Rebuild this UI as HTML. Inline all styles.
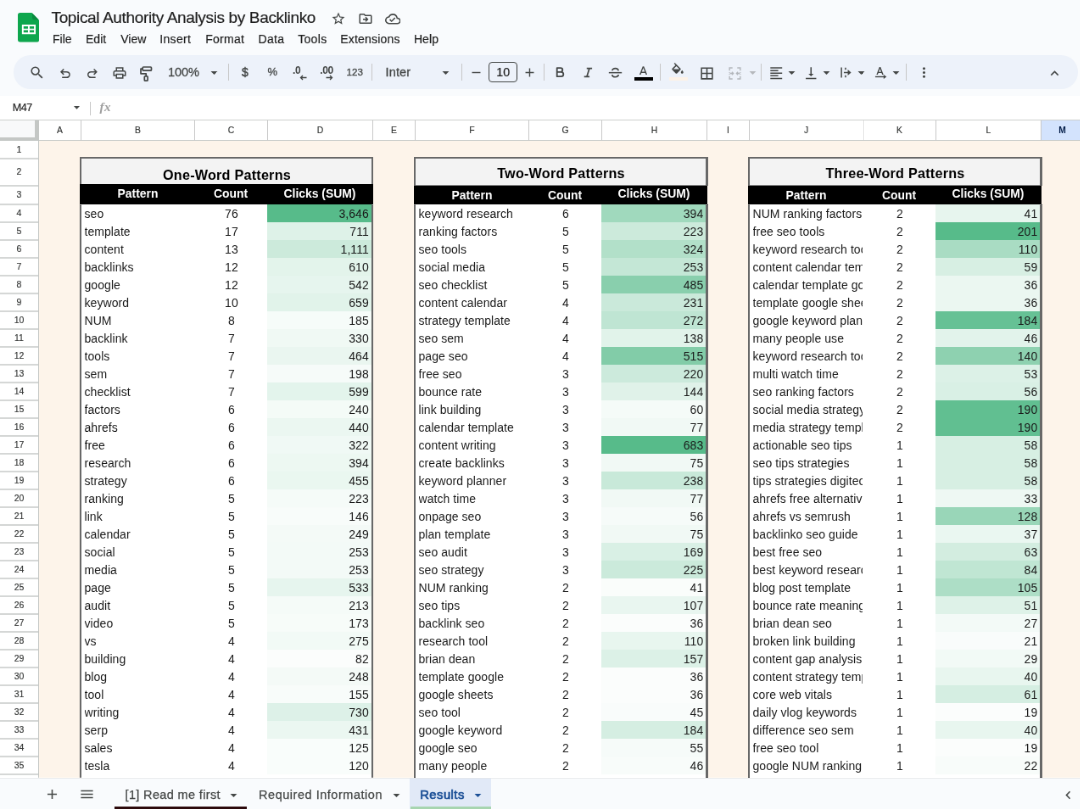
<!DOCTYPE html>
<html lang="en"><head><meta charset="utf-8"><title>Topical Authority Analysis by Backlinko - Google Sheets</title>
<style>
html,body{margin:0;padding:0;width:1080px;height:809px;overflow:hidden;background:#fff}
#app{position:absolute;left:0;top:0;width:1274px;height:954px;transform:scale(0.8481);will-change:transform;transform-origin:0 0;overflow:hidden;
font-family:"Liberation Sans",sans-serif;-webkit-font-smoothing:antialiased}
#app>div,#app>svg{position:absolute;white-space:nowrap}
.c{letter-spacing:.06px}
</style></head><body><div id="app">
<div style="left:0px;top:0px;width:1274px;height:113px;background:#f9fbfd;"></div>
<svg style="left:21.2px;top:15.200px" width="25.200" height="34.600" viewBox="0 0 26 35" preserveAspectRatio="none"><path d="M2.800 0H17l9 9v23.200a2.800 2.800 0 0 1-2.800 2.800H2.800A2.800 2.800 0 0 1 0 32.200V2.800A2.800 2.800 0 0 1 2.800 0z" fill="#0ea64d"></path><path d="M17.600 .600l7.800 7.800h-5.400A2.400 2.400 0 0 1 17.600 6z" fill="#0b8a40"></path><path d="M5 14.100h16.700v11.500H5zM7 16.100v2.750h5.350v-2.750zM14.350 16.100v2.750h5.350v-2.750zM7 20.850v2.750h5.350v-2.750zM14.350 20.850v2.750h5.350v-2.750z" fill="#fff" fill-rule="evenodd"></path></svg>
<div style="top: 11.12px; font-size: 19px; line-height: 19px; color: rgb(31, 31, 31); left: 60.5px; -webkit-text-stroke: 0.2px rgb(31, 31, 31); letter-spacing: -0.353px;">Topical Authority Analysis by Backlinko</div>
<svg style="left:390.4px;top:13.3px;" width="18" height="18" viewBox="0 0 24 24" fill="#444746"><path d="M22 9.24l-7.19-.62L12 2 9.19 8.63 2 9.24l5.46 4.73L5.82 21 12 17.27 18.18 21l-1.63-7.03L22 9.24zM12 15.4l-3.76 2.27 1-4.28-3.32-2.88 4.38-.38L12 6.1l1.71 4.04 4.38.38-3.32 2.88 1 4.28L12 15.4z"></path></svg>
<svg style="left:422.3px;top:13.4px;" width="18" height="18" viewBox="0 0 24 24" fill="#444746"><path d="M20 6h-8l-2-2H4c-1.1 0-2 .9-2 2v12c0 1.1.9 2 2 2h16c1.1 0 2-.9 2-2V8c0-1.1-.9-2-2-2zm0 12H4V6h5.17l2 2H20v10zm-7.16-4H8v-2h4.84l-1.59-1.59L12.66 9l4 4-4 4-1.41-1.41L12.840 14z"></path></svg>
<svg style="left:453.85px;top:12.95px;" width="18.5" height="18.5" viewBox="0 0 24 24" fill="#444746"><path d="M19.35 10.04C18.67 6.59 15.64 4 12 4 9.11 4 6.6 5.64 5.35 8.04 2.34 8.36 0 10.91 0 14c0 3.31 2.69 6 6 6h13c2.76 0 5-2.24 5-5 0-2.64-2.05-4.78-4.65-4.96zM19 18H6c-2.21 0-4-1.79-4-4 0-2.05 1.53-3.76 3.56-3.97l1.07-.11.5-.95C8.08 7.14 9.94 6 12 6c2.62 0 4.88 1.86 5.39 4.43l.3 1.5 1.53.11c1.56.1 2.78 1.41 2.78 2.96 0 1.65-1.35 3-3 3zm-9-3.82l-2.09-2.09L6.5 13.5 10 17l6.01-6.01-1.41-1.41z"></path></svg>
<div style="top: 38.85px; font-size: 14px; line-height: 14px; color: rgb(31, 31, 31); left: 62px; -webkit-text-stroke: 0.2px rgb(31, 31, 31); letter-spacing: 0.009px;">File</div>
<div style="top: 38.85px; font-size: 14px; line-height: 14px; color: rgb(31, 31, 31); left: 100.9px; -webkit-text-stroke: 0.2px rgb(31, 31, 31); letter-spacing: 0.069px;">Edit</div>
<div style="top: 38.85px; font-size: 14px; line-height: 14px; color: rgb(31, 31, 31); left: 142.2px; -webkit-text-stroke: 0.2px rgb(31, 31, 31); letter-spacing: 0.052px;">View</div>
<div style="top: 38.85px; font-size: 14px; line-height: 14px; color: rgb(31, 31, 31); left: 188.2px; -webkit-text-stroke: 0.2px rgb(31, 31, 31); letter-spacing: 0.347px;">Insert</div>
<div style="top: 38.85px; font-size: 14px; line-height: 14px; color: rgb(31, 31, 31); left: 242.2px; -webkit-text-stroke: 0.2px rgb(31, 31, 31); letter-spacing: 0.276px;">Format</div>
<div style="top: 38.85px; font-size: 14px; line-height: 14px; color: rgb(31, 31, 31); left: 304.5px; -webkit-text-stroke: 0.2px rgb(31, 31, 31); letter-spacing: 0.33px;">Data</div>
<div style="top: 38.85px; font-size: 14px; line-height: 14px; color: rgb(31, 31, 31); left: 351.2px; -webkit-text-stroke: 0.2px rgb(31, 31, 31); letter-spacing: 0.322px;">Tools</div>
<div style="top: 38.85px; font-size: 14px; line-height: 14px; color: rgb(31, 31, 31); left: 401.3px; -webkit-text-stroke: 0.2px rgb(31, 31, 31); letter-spacing: 0.182px;">Extensions</div>
<div style="top: 38.85px; font-size: 14px; line-height: 14px; color: rgb(31, 31, 31); left: 487.9px; -webkit-text-stroke: 0.2px rgb(31, 31, 31); letter-spacing: 0.101px;">Help</div>
<div style="left:16px;top:65px;width:1255px;height:40px;background:#edf2fa;border-radius:20px;"></div>
<svg style="left:33.7px;top:75.9px;" width="19.2" height="19.2" viewBox="0 0 24 24" fill="#444746"><path d="M15.5 14h-.79l-.28-.27A6.471 6.471 0 0 0 16 9.5 6.5 6.5 0 1 0 9.5 16c1.61 0 3.09-.59 4.23-1.57l.27.28v.79l5 4.99L20.49 19l-4.99-5zm-6 0C7.01 14 5 11.99 5 9.5S7.01 5 9.5 5 14 7.01 14 9.5 11.99 14 9.5 14z"></path></svg>
<svg style="left:68.1px;top:78px;" width="17.8" height="17.8" viewBox="0 0 24 24" fill="#444746"><path d="M7 19v-2h7.1q1.575 0 2.738-1T18 13.5 16.838 11 14.1 10H7.8l2.6 2.6L9 14 4 9l5-5 1.4 1.4L7.8 8h6.3q2.425 0 4.163 1.575T20 13.5t-1.737 3.925T14.1 19z"></path></svg>
<svg style="left:99.9px;top:78px;transform:scaleX(-1);" width="17.8" height="17.8" viewBox="0 0 24 24" fill="#444746"><path d="M7 19v-2h7.1q1.575 0 2.738-1T18 13.5 16.838 11 14.1 10H7.8l2.6 2.6L9 14 4 9l5-5 1.4 1.4L7.8 8h6.3q2.425 0 4.163 1.575T20 13.5t-1.737 3.925T14.1 19z"></path></svg>
<svg style="left:131.9px;top:76.8px;" width="18" height="18" viewBox="0 0 24 24" fill="#444746"><path d="M19 8h-1V3H6v5H5c-1.66 0-3 1.34-3 3v6h4v4h12v-4h4v-6c0-1.66-1.34-3-3-3zM8 5h8v3H8V5zm8 14H8v-4h8v4zm2-4v-2H6v2H4v-4c0-.55.45-1 1-1h14c.55 0 1 .45 1 1v4h-2z"></path></svg>
<svg style="left:162.3px;top:76.500px" width="20" height="20" viewBox="0 0 20 20" fill="none" stroke="#444746" stroke-width="1.700" stroke-linejoin="round"><rect x="6.200" y="2" width="10.300" height="4.200" rx="1"></rect><path d="M6.200 4.100H4V9.800h6.200v3"></path><rect x="8.300" y="12.800" width="3.800" height="5.400" rx="1"></rect></svg>
<div style="top: 78.23px; font-size: 14.5px; line-height: 14.5px; color: rgb(68, 71, 70); left: 198.1px; -webkit-text-stroke: 0.3px rgb(68, 71, 70); letter-spacing: -0.123px;">100%</div>
<svg style="left:242.5px;top:75.7px;" width="19" height="19" viewBox="0 0 24 24" fill="#444746"><path d="M7 10l5 5 5-5z"></path></svg>
<div style="left:268.7px;top:75px;width:1px;height:20px;background:#c7c7c7;"></div>
<div style="top:78.35px;font-size:14px;line-height:14px;color:#444746;left:88.9px;width:400px;text-align:center;-webkit-text-stroke:0.400px #444746;">$</div>
<div style="top:78.10px;font-size:13px;line-height:13px;color:#444746;left:121.3px;width:400px;text-align:center;-webkit-text-stroke:0.300px #444746;">%</div>
<div style="top:76.94px;font-size:12px;line-height:12px;color:#444746;font-weight:700;letter-spacing:-0.3px;left:149.6px;width:400px;text-align:center;">.0</div>
<svg style="left:352.8px;top:87.700px" width="9" height="7" viewBox="0 0 9 7" fill="none" stroke="#444746" stroke-width="1.300"><path d="M8.500 3.500H1.500M4 1L1.500 3.500 4 6"></path></svg>
<div style="top:76.94px;font-size:12px;line-height:12px;color:#444746;font-weight:700;letter-spacing:-0.3px;left:185.1px;width:400px;text-align:center;">.00</div>
<svg style="left:384.3px;top:87.700px" width="9" height="7" viewBox="0 0 9 7" fill="none" stroke="#444746" stroke-width="1.300"><path d="M0.500 3.500h7M5 1l2.500 2.500L5 6"></path></svg>
<div style="top:79.38px;font-size:11.6px;line-height:11.6px;color:#444746;left:218.2px;width:400px;text-align:center;-webkit-text-stroke:0.300px #444746;">123</div>
<div style="left:438.1px;top:75px;width:1px;height:20px;background:#c7c7c7;"></div>
<div style="top: 78.13px; font-size: 14.5px; line-height: 14.5px; color: rgb(68, 71, 70); left: 454.5px; -webkit-text-stroke: 0.3px rgb(68, 71, 70); letter-spacing: 0.157px;">Inter</div>
<svg style="left:515.8px;top:75.7px;" width="19" height="19" viewBox="0 0 24 24" fill="#444746"><path d="M7 10l5 5 5-5z"></path></svg>
<div style="left:543.9px;top:75px;width:1px;height:20px;background:#c7c7c7;"></div>
<svg style="left:552.8px;top:76.5px;" width="17" height="17" viewBox="0 0 24 24" fill="#444746"><path d="M19 13H5v-2h14v2z"></path></svg>
<div style="left:575.8px;top:73.300px;width:34.400px;height:23.400px;border:1px solid #444746;border-radius:4px;box-sizing:border-box"></div>
<div style="top:78.20px;font-size:14.3px;line-height:14.3px;color:#1f1f1f;left:393.2px;width:400px;text-align:center;-webkit-text-stroke:0.200px #1f1f1f;">10</div>
<svg style="left:616.4px;top:76.5px;" width="17" height="17" viewBox="0 0 24 24" fill="#444746"><path d="M19 13h-6v6h-2v-6H5v-2h6V5h2v6h6v2z"></path></svg>
<div style="left:641.2px;top:75px;width:1px;height:20px;background:#c7c7c7;"></div>
<svg style="left:651.4px;top:75.700px" width="19" height="19" viewBox="0 0 24 24" fill="none" stroke="#444746" stroke-width="2.300" stroke-linejoin="round"><path d="M7.200 5.300h5.300a3 3 0 0 1 0 6H7.200zM7.200 11.300h6.300a3.300 3.300 0 0 1 0 6.600H7.200z"></path></svg>
<svg style="left:683.8px;top:75.700px" width="19" height="19" viewBox="0 0 24 24" fill="none" stroke="#444746" stroke-width="2.200"><path d="M9.800 5.800h8M6 18.200h8M13.900 5.800l-4 12.400"></path></svg>
<svg style="left:715.7px;top:75.500px" width="19" height="19" viewBox="0 0 24 24" fill="none" stroke="#444746" stroke-width="1.900"><path d="M2.300 12.200h19.400"></path><path d="M16.600 9.300c-.2-2.200-2-3.500-4.600-3.500-2.700 0-4.500 1.300-4.500 3.300M7.200 15.200c.3 2.200 2.100 3.400 4.800 3.400 2.800 0 4.600-1.300 4.600-3.300" stroke-width="2.100"></path></svg>
<svg style="left:749.7px;top:75.8px;" width="17" height="17" viewBox="0 0 24 24" fill="#444746"><path d="M11 3L5.5 17h2.25l1.12-3h6.25l1.12 3h2.25L13 3h-2zm-1.38 9L12 5.67 14.38 12H9.62z"></path></svg>
<div style="left:747.8px;top:91.4px;width:22.5px;height:3.5px;background:#000;"></div>
<div style="left:778.1px;top:75px;width:1px;height:20px;background:#c7c7c7;"></div>
<svg style="left:790.2px;top:74.2px;" width="18" height="18" viewBox="0 0 24 24" fill="#444746"><path d="M16.56 8.94L7.62 0 6.21 1.41l2.38 2.38-5.15 5.15c-.59.59-.59 1.54 0 2.12l5.5 5.5c.29.29.68.44 1.06.44s.77-.15 1.06-.44l5.5-5.5c.59-.58.59-1.53 0-2.12zM5.21 10L10 5.21 14.79 10H5.21zM19 11.5s-2 2.17-2 3.5c0 1.1.9 2 2 2s2-.9 2-2c0-1.33-2-3.5-2-3.5z"></path></svg>
<div style="left:788.5px;top:91.4px;width:22.5px;height:3.5px;background:#fdf3e8;"></div>
<svg style="left:823.8px;top:76.7px;" width="19" height="19" viewBox="0 0 24 24" fill="#444746"><path d="M3 3v18h18V3H3zm8 16H5v-6h6v6zm0-8H5V5h6v6zm8 8h-6v-6h6v6zm0-8h-6V5h6v6z"></path></svg>
<svg style="left:856.7px;top:76.700px" width="19" height="19" viewBox="0 0 24 24" fill="none" stroke="#b3b7bc" stroke-width="1.800"><path d="M8.500 3.800H4v4.200M4 16v4.200h4.500M15.500 3.800H20v4.200M20 16v4.200h-4.500M4 10v1M4 13v1M20 10v1M20 13v1"></path><path d="M4.500 12h5M7.500 9.800L9.700 12l-2.200 2.200M19.500 12h-5M16.500 9.800L14.300 12l2.200 2.200" stroke-width="1.600"></path></svg>
<svg style="left:877.8px;top:75.7px;" width="19" height="19" viewBox="0 0 24 24" fill="#b5b8bc"><path d="M7 10l5 5 5-5z"></path></svg>
<div style="left:897.2px;top:75px;width:1px;height:20px;background:#c7c7c7;"></div>
<svg style="left:905.75px;top:76.65px;" width="18.5" height="18.5" viewBox="0 0 24 24" fill="#444746"><path d="M15 15H3v2h12v-2zm0-8H3v2h12V7zM3 13h18v-2H3v2zm0 8h18v-2H3v2zM3 3v2h18V3H3z"></path></svg>
<svg style="left:924px;top:75.7px;" width="19" height="19" viewBox="0 0 24 24" fill="#444746"><path d="M7 10l5 5 5-5z"></path></svg>
<svg style="left:947.05px;top:76.65px;" width="18.5" height="18.5" viewBox="0 0 24 24" fill="#444746"><path d="M16 13h-3V3h-2v10H8l4 4 4-4zM4 19v2h16v-2H4z"></path></svg>
<svg style="left:964.8px;top:75.7px;" width="19" height="19" viewBox="0 0 24 24" fill="#444746"><path d="M7 10l5 5 5-5z"></path></svg>
<svg style="left:987.6px;top:76.200px" width="19" height="19" viewBox="0 0 24 24" fill="none" stroke="#444746" stroke-width="1.900"><path d="M5.200 4.300v15.400M11.300 4.800v3.200M11.300 16v3.200M8.800 12h9.200"></path><path d="M14.600 7.700L19.700 12l-5.100 4.300z" fill="#444746" stroke="none"></path></svg>
<svg style="left:1005.5px;top:75.7px;" width="19" height="19" viewBox="0 0 24 24" fill="#444746"><path d="M7 10l5 5 5-5z"></path></svg>
<svg style="left:1029.3px;top:76px" width="19" height="19" viewBox="0 0 24 24"><path d="M9.900 3.800L5.500 15.300h1.950l.95-2.600h4.800l.95 2.600h1.950L11.700 3.800zm-.850 7.200l1.750-4.800 1.750 4.800z" fill="#444746"></path><path d="M3.700 18.300h13" fill="none" stroke="#444746" stroke-width="1.800"></path><path d="M16.200 15.100l4.400 3.200-4.400 3.200z" fill="#444746"></path></svg>
<svg style="left:1046.7px;top:75.7px;" width="19" height="19" viewBox="0 0 24 24" fill="#444746"><path d="M7 10l5 5 5-5z"></path></svg>
<div style="left:1068.1px;top:75px;width:1px;height:20px;background:#c7c7c7;"></div>
<svg style="left:1079.8px;top:76px;" width="19" height="19" viewBox="0 0 24 24" fill="#444746"><path d="M12 8c1.1 0 2-.9 2-2s-.9-2-2-2-2 .9-2 2 .9 2 2 2zm0 2c-1.1 0-2 .9-2 2s.9 2 2 2 2-.9 2-2-.9-2-2-2zm0 6c-1.1 0-2 .9-2 2s.9 2 2 2 2-.9 2-2-.9-2-2-2z"></path></svg>
<svg style="left:1234.1px;top:76.5px;" width="19" height="19" viewBox="0 0 24 24" fill="#444746"><path d="M12 8l-6 6 1.41 1.41L12 10.83l4.59 4.58L18 14z"></path></svg>
<div style="left:0px;top:113px;width:1274px;height:29px;background:#fff;"></div>
<div style="left:0px;top:141px;width:1274px;height:1px;background:#cdd0ce;"></div>
<div style="top:121.12px;font-size:12.5px;line-height:12.5px;color:#1f1f1f;letter-spacing:-0.45px;left:14.7px;-webkit-text-stroke:0.200px #1f1f1f;">M47</div>
<svg style="left:81.8px;top:118.4px;" width="17" height="17" viewBox="0 0 24 24" fill="#444746"><path d="M7 10l5 5 5-5z"></path></svg>
<div style="left:106.1px;top:119.5px;width:1px;height:16.5px;background:#c7c7c7;"></div>
<div style="top:118.90px;font-size:15px;line-height:15px;color:#a0a0a0;font-weight:700;left:117.4px;font-family:'Liberation Serif',serif;font-style:italic;letter-spacing:0.600px;">fx</div>
<div style="left:0px;top:142px;width:1274px;height:775px;background:#fdf4ea;"></div>
<div style="left:0px;top:142px;width:1274px;height:24px;background:#fff;"></div>
<div style="left:1228px;top:142px;width:50px;height:23px;background:#d3e3fd;"></div>
<div style="left:0px;top:165px;width:1274px;height:1px;background:#c8cbc9;"></div>
<div style="left:95px;top:142px;width:1px;height:24px;background:#c8c8c8;"></div>
<div style="top:148.90px;font-size:10.4px;line-height:10.4px;color:#333534;left:-129.5px;width:400px;text-align:center;-webkit-text-stroke:0.150px #333534;">A</div>
<div style="left:229px;top:142px;width:1px;height:24px;background:#c8c8c8;"></div>
<div style="top:148.90px;font-size:10.4px;line-height:10.4px;color:#333534;left:-37.5px;width:400px;text-align:center;-webkit-text-stroke:0.150px #333534;">B</div>
<div style="left:315px;top:142px;width:1px;height:24px;background:#c8c8c8;"></div>
<div style="top:148.90px;font-size:10.4px;line-height:10.4px;color:#333534;left:72.5px;width:400px;text-align:center;-webkit-text-stroke:0.150px #333534;">C</div>
<div style="left:439px;top:142px;width:1px;height:24px;background:#c8c8c8;"></div>
<div style="top:148.90px;font-size:10.4px;line-height:10.4px;color:#333534;left:177.5px;width:400px;text-align:center;-webkit-text-stroke:0.150px #333534;">D</div>
<div style="left:489px;top:142px;width:1px;height:24px;background:#c8c8c8;"></div>
<div style="top:148.90px;font-size:10.4px;line-height:10.4px;color:#333534;left:264.5px;width:400px;text-align:center;-webkit-text-stroke:0.150px #333534;">E</div>
<div style="left:623px;top:142px;width:1px;height:24px;background:#c8c8c8;"></div>
<div style="top:148.90px;font-size:10.4px;line-height:10.4px;color:#333534;left:356.5px;width:400px;text-align:center;-webkit-text-stroke:0.150px #333534;">F</div>
<div style="left:709px;top:142px;width:1px;height:24px;background:#c8c8c8;"></div>
<div style="top:148.90px;font-size:10.4px;line-height:10.4px;color:#333534;left:466.5px;width:400px;text-align:center;-webkit-text-stroke:0.150px #333534;">G</div>
<div style="left:833px;top:142px;width:1px;height:24px;background:#c8c8c8;"></div>
<div style="top:148.90px;font-size:10.4px;line-height:10.4px;color:#333534;left:571.5px;width:400px;text-align:center;-webkit-text-stroke:0.150px #333534;">H</div>
<div style="left:883px;top:142px;width:1px;height:24px;background:#c8c8c8;"></div>
<div style="top:148.90px;font-size:10.4px;line-height:10.4px;color:#333534;left:658.5px;width:400px;text-align:center;-webkit-text-stroke:0.150px #333534;">I</div>
<div style="left:1017px;top:142px;width:1px;height:24px;background:#c8c8c8;"></div>
<div style="top:148.90px;font-size:10.4px;line-height:10.4px;color:#333534;left:750.5px;width:400px;text-align:center;-webkit-text-stroke:0.150px #333534;">J</div>
<div style="left:1103px;top:142px;width:1px;height:24px;background:#c8c8c8;"></div>
<div style="top:148.90px;font-size:10.4px;line-height:10.4px;color:#333534;left:860.5px;width:400px;text-align:center;-webkit-text-stroke:0.150px #333534;">K</div>
<div style="left:1227px;top:142px;width:1px;height:24px;background:#c8c8c8;"></div>
<div style="top:148.90px;font-size:10.4px;line-height:10.4px;color:#333534;left:965.5px;width:400px;text-align:center;-webkit-text-stroke:0.150px #333534;">L</div>
<div style="left:1277px;top:142px;width:1px;height:24px;background:#c8c8c8;"></div>
<div style="top:148.98px;font-size:10.3px;line-height:10.3px;color:#041e49;font-weight:700;left:1052.5px;width:400px;text-align:center;">M</div>
<div style="left:0px;top:166px;width:46px;height:751px;background:#fff;"></div>
<div style="left:0px;top:186.35px;width:45px;height:1.3px;background:#d5d7d6;"></div>
<div style="top:170.51px;font-size:10.5px;line-height:10.5px;color:#333534;left:-177.5px;width:400px;text-align:center;-webkit-text-stroke:0.150px #333534;">1</div>
<div style="left:0px;top:218.35px;width:45px;height:1.3px;background:#d5d7d6;"></div>
<div style="top:197.01px;font-size:10.5px;line-height:10.5px;color:#333534;left:-177.5px;width:400px;text-align:center;-webkit-text-stroke:0.150px #333534;">2</div>
<div style="left:0px;top:240.35px;width:45px;height:1.3px;background:#d5d7d6;"></div>
<div style="top:224.01px;font-size:10.5px;line-height:10.5px;color:#333534;left:-177.5px;width:400px;text-align:center;-webkit-text-stroke:0.150px #333534;">3</div>
<div style="left:0px;top:261.35px;width:45px;height:1.3px;background:#d5d7d6;"></div>
<div style="top:246.16px;font-size:10.5px;line-height:10.5px;color:#333534;left:-177.5px;width:400px;text-align:center;-webkit-text-stroke:0.150px #333534;">4</div>
<div style="left:0px;top:282.35px;width:45px;height:1.3px;background:#d5d7d6;"></div>
<div style="top:267.16px;font-size:10.5px;line-height:10.5px;color:#333534;left:-177.5px;width:400px;text-align:center;-webkit-text-stroke:0.150px #333534;">5</div>
<div style="left:0px;top:303.35px;width:45px;height:1.3px;background:#d5d7d6;"></div>
<div style="top:288.16px;font-size:10.5px;line-height:10.5px;color:#333534;left:-177.5px;width:400px;text-align:center;-webkit-text-stroke:0.150px #333534;">6</div>
<div style="left:0px;top:324.35px;width:45px;height:1.3px;background:#d5d7d6;"></div>
<div style="top:309.16px;font-size:10.5px;line-height:10.5px;color:#333534;left:-177.5px;width:400px;text-align:center;-webkit-text-stroke:0.150px #333534;">7</div>
<div style="left:0px;top:345.35px;width:45px;height:1.3px;background:#d5d7d6;"></div>
<div style="top:330.16px;font-size:10.5px;line-height:10.5px;color:#333534;left:-177.5px;width:400px;text-align:center;-webkit-text-stroke:0.150px #333534;">8</div>
<div style="left:0px;top:366.35px;width:45px;height:1.3px;background:#d5d7d6;"></div>
<div style="top:351.16px;font-size:10.5px;line-height:10.5px;color:#333534;left:-177.5px;width:400px;text-align:center;-webkit-text-stroke:0.150px #333534;">9</div>
<div style="left:0px;top:387.35px;width:45px;height:1.3px;background:#d5d7d6;"></div>
<div style="top:372.16px;font-size:10.5px;line-height:10.5px;color:#333534;left:-177.5px;width:400px;text-align:center;-webkit-text-stroke:0.150px #333534;">10</div>
<div style="left:0px;top:408.35px;width:45px;height:1.3px;background:#d5d7d6;"></div>
<div style="top:393.16px;font-size:10.5px;line-height:10.5px;color:#333534;left:-177.5px;width:400px;text-align:center;-webkit-text-stroke:0.150px #333534;">11</div>
<div style="left:0px;top:429.35px;width:45px;height:1.3px;background:#d5d7d6;"></div>
<div style="top:414.16px;font-size:10.5px;line-height:10.5px;color:#333534;left:-177.5px;width:400px;text-align:center;-webkit-text-stroke:0.150px #333534;">12</div>
<div style="left:0px;top:450.35px;width:45px;height:1.3px;background:#d5d7d6;"></div>
<div style="top:435.16px;font-size:10.5px;line-height:10.5px;color:#333534;left:-177.5px;width:400px;text-align:center;-webkit-text-stroke:0.150px #333534;">13</div>
<div style="left:0px;top:471.35px;width:45px;height:1.3px;background:#d5d7d6;"></div>
<div style="top:456.16px;font-size:10.5px;line-height:10.5px;color:#333534;left:-177.5px;width:400px;text-align:center;-webkit-text-stroke:0.150px #333534;">14</div>
<div style="left:0px;top:492.35px;width:45px;height:1.3px;background:#d5d7d6;"></div>
<div style="top:477.16px;font-size:10.5px;line-height:10.5px;color:#333534;left:-177.5px;width:400px;text-align:center;-webkit-text-stroke:0.150px #333534;">15</div>
<div style="left:0px;top:513.35px;width:45px;height:1.3px;background:#d5d7d6;"></div>
<div style="top:498.16px;font-size:10.5px;line-height:10.5px;color:#333534;left:-177.5px;width:400px;text-align:center;-webkit-text-stroke:0.150px #333534;">16</div>
<div style="left:0px;top:534.35px;width:45px;height:1.3px;background:#d5d7d6;"></div>
<div style="top:519.16px;font-size:10.5px;line-height:10.5px;color:#333534;left:-177.5px;width:400px;text-align:center;-webkit-text-stroke:0.150px #333534;">17</div>
<div style="left:0px;top:555.35px;width:45px;height:1.3px;background:#d5d7d6;"></div>
<div style="top:540.16px;font-size:10.5px;line-height:10.5px;color:#333534;left:-177.5px;width:400px;text-align:center;-webkit-text-stroke:0.150px #333534;">18</div>
<div style="left:0px;top:576.35px;width:45px;height:1.3px;background:#d5d7d6;"></div>
<div style="top:561.16px;font-size:10.5px;line-height:10.5px;color:#333534;left:-177.5px;width:400px;text-align:center;-webkit-text-stroke:0.150px #333534;">19</div>
<div style="left:0px;top:597.35px;width:45px;height:1.3px;background:#d5d7d6;"></div>
<div style="top:582.16px;font-size:10.5px;line-height:10.5px;color:#333534;left:-177.5px;width:400px;text-align:center;-webkit-text-stroke:0.150px #333534;">20</div>
<div style="left:0px;top:618.35px;width:45px;height:1.3px;background:#d5d7d6;"></div>
<div style="top:603.16px;font-size:10.5px;line-height:10.5px;color:#333534;left:-177.5px;width:400px;text-align:center;-webkit-text-stroke:0.150px #333534;">21</div>
<div style="left:0px;top:639.35px;width:45px;height:1.3px;background:#d5d7d6;"></div>
<div style="top:624.16px;font-size:10.5px;line-height:10.5px;color:#333534;left:-177.5px;width:400px;text-align:center;-webkit-text-stroke:0.150px #333534;">22</div>
<div style="left:0px;top:660.35px;width:45px;height:1.3px;background:#d5d7d6;"></div>
<div style="top:645.16px;font-size:10.5px;line-height:10.5px;color:#333534;left:-177.5px;width:400px;text-align:center;-webkit-text-stroke:0.150px #333534;">23</div>
<div style="left:0px;top:681.35px;width:45px;height:1.3px;background:#d5d7d6;"></div>
<div style="top:666.16px;font-size:10.5px;line-height:10.5px;color:#333534;left:-177.5px;width:400px;text-align:center;-webkit-text-stroke:0.150px #333534;">24</div>
<div style="left:0px;top:702.35px;width:45px;height:1.3px;background:#d5d7d6;"></div>
<div style="top:687.16px;font-size:10.5px;line-height:10.5px;color:#333534;left:-177.5px;width:400px;text-align:center;-webkit-text-stroke:0.150px #333534;">25</div>
<div style="left:0px;top:723.35px;width:45px;height:1.3px;background:#d5d7d6;"></div>
<div style="top:708.16px;font-size:10.5px;line-height:10.5px;color:#333534;left:-177.5px;width:400px;text-align:center;-webkit-text-stroke:0.150px #333534;">26</div>
<div style="left:0px;top:744.35px;width:45px;height:1.3px;background:#d5d7d6;"></div>
<div style="top:729.16px;font-size:10.5px;line-height:10.5px;color:#333534;left:-177.5px;width:400px;text-align:center;-webkit-text-stroke:0.150px #333534;">27</div>
<div style="left:0px;top:765.35px;width:45px;height:1.3px;background:#d5d7d6;"></div>
<div style="top:750.16px;font-size:10.5px;line-height:10.5px;color:#333534;left:-177.5px;width:400px;text-align:center;-webkit-text-stroke:0.150px #333534;">28</div>
<div style="left:0px;top:786.35px;width:45px;height:1.3px;background:#d5d7d6;"></div>
<div style="top:771.16px;font-size:10.5px;line-height:10.5px;color:#333534;left:-177.5px;width:400px;text-align:center;-webkit-text-stroke:0.150px #333534;">29</div>
<div style="left:0px;top:807.35px;width:45px;height:1.3px;background:#d5d7d6;"></div>
<div style="top:792.16px;font-size:10.5px;line-height:10.5px;color:#333534;left:-177.5px;width:400px;text-align:center;-webkit-text-stroke:0.150px #333534;">30</div>
<div style="left:0px;top:828.35px;width:45px;height:1.3px;background:#d5d7d6;"></div>
<div style="top:813.16px;font-size:10.5px;line-height:10.5px;color:#333534;left:-177.5px;width:400px;text-align:center;-webkit-text-stroke:0.150px #333534;">31</div>
<div style="left:0px;top:849.35px;width:45px;height:1.3px;background:#d5d7d6;"></div>
<div style="top:834.16px;font-size:10.5px;line-height:10.5px;color:#333534;left:-177.5px;width:400px;text-align:center;-webkit-text-stroke:0.150px #333534;">32</div>
<div style="left:0px;top:870.35px;width:45px;height:1.3px;background:#d5d7d6;"></div>
<div style="top:855.16px;font-size:10.5px;line-height:10.5px;color:#333534;left:-177.5px;width:400px;text-align:center;-webkit-text-stroke:0.150px #333534;">33</div>
<div style="left:0px;top:891.35px;width:45px;height:1.3px;background:#d5d7d6;"></div>
<div style="top:876.16px;font-size:10.5px;line-height:10.5px;color:#333534;left:-177.5px;width:400px;text-align:center;-webkit-text-stroke:0.150px #333534;">34</div>
<div style="left:0px;top:912.35px;width:45px;height:1.3px;background:#d5d7d6;"></div>
<div style="top:897.16px;font-size:10.5px;line-height:10.5px;color:#333534;left:-177.5px;width:400px;text-align:center;-webkit-text-stroke:0.150px #333534;">35</div>
<div style="left:0px;top:933.35px;width:45px;height:1.3px;background:#d5d7d6;"></div>
<div style="top:918.16px;font-size:10.5px;line-height:10.5px;color:#333534;left:-177.5px;width:400px;text-align:center;-webkit-text-stroke:0.150px #333534;">36</div>
<div style="left:45px;top:166px;width:1px;height:751px;background:#c4c7c5;"></div>
<div style="left:0px;top:142px;width:46px;height:24px;background:#f8f9fa;"></div>
<div style="left:41px;top:142px;width:5px;height:24px;background:#c4c7c5;"></div>
<div style="left:0px;top:161.5px;width:46px;height:4.5px;background:#c4c7c5;"></div>
<div style="left:95px;top:186px;width:345px;height:731px;background:#fff;"></div>
<div style="left:95px;top:186px;width:345px;height:32px;background:#f3f3f3;"></div>
<div style="top:197.99px;font-size:16.2px;line-height:16.2px;color:#000;font-weight:700;letter-spacing:0.22px;left:67.5px;width:400px;text-align:center;">One-Word Patterns</div>
<div style="left:315px;top:241px;width:124px;height:21px;background:#57bb8a;"></div>
<div style="left:315px;top:262px;width:124px;height:21px;background:#def2e8;"></div>
<div style="left:315px;top:283px;width:124px;height:21px;background:#cceadb;"></div>
<div style="left:315px;top:304px;width:124px;height:21px;background:#e3f4eb;"></div>
<div style="left:315px;top:325px;width:124px;height:21px;background:#e6f5ee;"></div>
<div style="left:315px;top:346px;width:124px;height:21px;background:#e1f3ea;"></div>
<div style="left:315px;top:367px;width:124px;height:21px;background:#f6fcf9;"></div>
<div style="left:315px;top:388px;width:124px;height:21px;background:#f0f9f4;"></div>
<div style="left:315px;top:409px;width:124px;height:21px;background:#eaf6f0;"></div>
<div style="left:315px;top:430px;width:124px;height:21px;background:#f6fbf9;"></div>
<div style="left:315px;top:451px;width:124px;height:21px;background:#e3f4ec;"></div>
<div style="left:315px;top:472px;width:124px;height:21px;background:#f4fbf7;"></div>
<div style="left:315px;top:493px;width:124px;height:21px;background:#ebf7f1;"></div>
<div style="left:315px;top:514px;width:124px;height:21px;background:#f0f9f5;"></div>
<div style="left:315px;top:535px;width:124px;height:21px;background:#edf8f2;"></div>
<div style="left:315px;top:556px;width:124px;height:21px;background:#eaf7f0;"></div>
<div style="left:315px;top:577px;width:124px;height:21px;background:#f5fbf8;"></div>
<div style="left:315px;top:598px;width:124px;height:21px;background:#f8fcfa;"></div>
<div style="left:315px;top:619px;width:124px;height:21px;background:#f4faf7;"></div>
<div style="left:315px;top:640px;width:124px;height:21px;background:#f3faf7;"></div>
<div style="left:315px;top:661px;width:124px;height:21px;background:#f3faf7;"></div>
<div style="left:315px;top:682px;width:124px;height:21px;background:#e6f5ee;"></div>
<div style="left:315px;top:703px;width:124px;height:21px;background:#f5fbf8;"></div>
<div style="left:315px;top:724px;width:124px;height:21px;background:#f7fcf9;"></div>
<div style="left:315px;top:745px;width:124px;height:21px;background:#f2faf6;"></div>
<div style="left:315px;top:766px;width:124px;height:21px;background:#fbfdfc;"></div>
<div style="left:315px;top:787px;width:124px;height:21px;background:#f4faf7;"></div>
<div style="left:315px;top:808px;width:124px;height:21px;background:#f8fcfa;"></div>
<div style="left:315px;top:829px;width:124px;height:21px;background:#ddf1e8;"></div>
<div style="left:315px;top:850px;width:124px;height:21px;background:#ebf7f1;"></div>
<div style="left:315px;top:871px;width:124px;height:21px;background:#f9fdfb;"></div>
<div style="left:315px;top:892px;width:124px;height:21px;background:#f9fdfb;"></div>
<div class="c" style="top:244.55px;font-size:14px;line-height:14px;color:#1a1a1a;left:99.5px;width:129px;overflow:hidden;padding-bottom:5px;white-space:nowrap;">seo</div>
<div class="c" style="top:244.55px;font-size:14px;line-height:14px;color:#1a1a1a;left:72.9px;width:400px;text-align:center;">76</div>
<div class="c" style="top:244.55px;font-size:14px;line-height:14px;color:#1a1a1a;left:34.8px;width:400px;text-align:right;">3,646</div>
<div class="c" style="top:265.55px;font-size:14px;line-height:14px;color:#1a1a1a;left:99.5px;width:129px;overflow:hidden;padding-bottom:5px;white-space:nowrap;">template</div>
<div class="c" style="top:265.55px;font-size:14px;line-height:14px;color:#1a1a1a;left:72.9px;width:400px;text-align:center;">17</div>
<div class="c" style="top:265.55px;font-size:14px;line-height:14px;color:#1a1a1a;left:34.8px;width:400px;text-align:right;">711</div>
<div class="c" style="top:286.55px;font-size:14px;line-height:14px;color:#1a1a1a;left:99.5px;width:129px;overflow:hidden;padding-bottom:5px;white-space:nowrap;">content</div>
<div class="c" style="top:286.55px;font-size:14px;line-height:14px;color:#1a1a1a;left:72.9px;width:400px;text-align:center;">13</div>
<div class="c" style="top:286.55px;font-size:14px;line-height:14px;color:#1a1a1a;left:34.8px;width:400px;text-align:right;">1,111</div>
<div class="c" style="top:307.55px;font-size:14px;line-height:14px;color:#1a1a1a;left:99.5px;width:129px;overflow:hidden;padding-bottom:5px;white-space:nowrap;">backlinks</div>
<div class="c" style="top:307.55px;font-size:14px;line-height:14px;color:#1a1a1a;left:72.9px;width:400px;text-align:center;">12</div>
<div class="c" style="top:307.55px;font-size:14px;line-height:14px;color:#1a1a1a;left:34.8px;width:400px;text-align:right;">610</div>
<div class="c" style="top:328.55px;font-size:14px;line-height:14px;color:#1a1a1a;left:99.5px;width:129px;overflow:hidden;padding-bottom:5px;white-space:nowrap;">google</div>
<div class="c" style="top:328.55px;font-size:14px;line-height:14px;color:#1a1a1a;left:72.9px;width:400px;text-align:center;">12</div>
<div class="c" style="top:328.55px;font-size:14px;line-height:14px;color:#1a1a1a;left:34.8px;width:400px;text-align:right;">542</div>
<div class="c" style="top:349.55px;font-size:14px;line-height:14px;color:#1a1a1a;left:99.5px;width:129px;overflow:hidden;padding-bottom:5px;white-space:nowrap;">keyword</div>
<div class="c" style="top:349.55px;font-size:14px;line-height:14px;color:#1a1a1a;left:72.9px;width:400px;text-align:center;">10</div>
<div class="c" style="top:349.55px;font-size:14px;line-height:14px;color:#1a1a1a;left:34.8px;width:400px;text-align:right;">659</div>
<div class="c" style="top:370.55px;font-size:14px;line-height:14px;color:#1a1a1a;left:99.5px;width:129px;overflow:hidden;padding-bottom:5px;white-space:nowrap;">NUM</div>
<div class="c" style="top:370.55px;font-size:14px;line-height:14px;color:#1a1a1a;left:72.9px;width:400px;text-align:center;">8</div>
<div class="c" style="top:370.55px;font-size:14px;line-height:14px;color:#1a1a1a;left:34.8px;width:400px;text-align:right;">185</div>
<div class="c" style="top:391.55px;font-size:14px;line-height:14px;color:#1a1a1a;left:99.5px;width:129px;overflow:hidden;padding-bottom:5px;white-space:nowrap;">backlink</div>
<div class="c" style="top:391.55px;font-size:14px;line-height:14px;color:#1a1a1a;left:72.9px;width:400px;text-align:center;">7</div>
<div class="c" style="top:391.55px;font-size:14px;line-height:14px;color:#1a1a1a;left:34.8px;width:400px;text-align:right;">330</div>
<div class="c" style="top:412.55px;font-size:14px;line-height:14px;color:#1a1a1a;left:99.5px;width:129px;overflow:hidden;padding-bottom:5px;white-space:nowrap;">tools</div>
<div class="c" style="top:412.55px;font-size:14px;line-height:14px;color:#1a1a1a;left:72.9px;width:400px;text-align:center;">7</div>
<div class="c" style="top:412.55px;font-size:14px;line-height:14px;color:#1a1a1a;left:34.8px;width:400px;text-align:right;">464</div>
<div class="c" style="top:433.55px;font-size:14px;line-height:14px;color:#1a1a1a;left:99.5px;width:129px;overflow:hidden;padding-bottom:5px;white-space:nowrap;">sem</div>
<div class="c" style="top:433.55px;font-size:14px;line-height:14px;color:#1a1a1a;left:72.9px;width:400px;text-align:center;">7</div>
<div class="c" style="top:433.55px;font-size:14px;line-height:14px;color:#1a1a1a;left:34.8px;width:400px;text-align:right;">198</div>
<div class="c" style="top:454.55px;font-size:14px;line-height:14px;color:#1a1a1a;left:99.5px;width:129px;overflow:hidden;padding-bottom:5px;white-space:nowrap;">checklist</div>
<div class="c" style="top:454.55px;font-size:14px;line-height:14px;color:#1a1a1a;left:72.9px;width:400px;text-align:center;">7</div>
<div class="c" style="top:454.55px;font-size:14px;line-height:14px;color:#1a1a1a;left:34.8px;width:400px;text-align:right;">599</div>
<div class="c" style="top:475.55px;font-size:14px;line-height:14px;color:#1a1a1a;left:99.5px;width:129px;overflow:hidden;padding-bottom:5px;white-space:nowrap;">factors</div>
<div class="c" style="top:475.55px;font-size:14px;line-height:14px;color:#1a1a1a;left:72.9px;width:400px;text-align:center;">6</div>
<div class="c" style="top:475.55px;font-size:14px;line-height:14px;color:#1a1a1a;left:34.8px;width:400px;text-align:right;">240</div>
<div class="c" style="top:496.55px;font-size:14px;line-height:14px;color:#1a1a1a;left:99.5px;width:129px;overflow:hidden;padding-bottom:5px;white-space:nowrap;">ahrefs</div>
<div class="c" style="top:496.55px;font-size:14px;line-height:14px;color:#1a1a1a;left:72.9px;width:400px;text-align:center;">6</div>
<div class="c" style="top:496.55px;font-size:14px;line-height:14px;color:#1a1a1a;left:34.8px;width:400px;text-align:right;">440</div>
<div class="c" style="top:517.55px;font-size:14px;line-height:14px;color:#1a1a1a;left:99.5px;width:129px;overflow:hidden;padding-bottom:5px;white-space:nowrap;">free</div>
<div class="c" style="top:517.55px;font-size:14px;line-height:14px;color:#1a1a1a;left:72.9px;width:400px;text-align:center;">6</div>
<div class="c" style="top:517.55px;font-size:14px;line-height:14px;color:#1a1a1a;left:34.8px;width:400px;text-align:right;">322</div>
<div class="c" style="top:538.55px;font-size:14px;line-height:14px;color:#1a1a1a;left:99.5px;width:129px;overflow:hidden;padding-bottom:5px;white-space:nowrap;">research</div>
<div class="c" style="top:538.55px;font-size:14px;line-height:14px;color:#1a1a1a;left:72.9px;width:400px;text-align:center;">6</div>
<div class="c" style="top:538.55px;font-size:14px;line-height:14px;color:#1a1a1a;left:34.8px;width:400px;text-align:right;">394</div>
<div class="c" style="top:559.55px;font-size:14px;line-height:14px;color:#1a1a1a;left:99.5px;width:129px;overflow:hidden;padding-bottom:5px;white-space:nowrap;">strategy</div>
<div class="c" style="top:559.55px;font-size:14px;line-height:14px;color:#1a1a1a;left:72.9px;width:400px;text-align:center;">6</div>
<div class="c" style="top:559.55px;font-size:14px;line-height:14px;color:#1a1a1a;left:34.8px;width:400px;text-align:right;">455</div>
<div class="c" style="top:580.55px;font-size:14px;line-height:14px;color:#1a1a1a;left:99.5px;width:129px;overflow:hidden;padding-bottom:5px;white-space:nowrap;">ranking</div>
<div class="c" style="top:580.55px;font-size:14px;line-height:14px;color:#1a1a1a;left:72.9px;width:400px;text-align:center;">5</div>
<div class="c" style="top:580.55px;font-size:14px;line-height:14px;color:#1a1a1a;left:34.8px;width:400px;text-align:right;">223</div>
<div class="c" style="top:601.55px;font-size:14px;line-height:14px;color:#1a1a1a;left:99.5px;width:129px;overflow:hidden;padding-bottom:5px;white-space:nowrap;">link</div>
<div class="c" style="top:601.55px;font-size:14px;line-height:14px;color:#1a1a1a;left:72.9px;width:400px;text-align:center;">5</div>
<div class="c" style="top:601.55px;font-size:14px;line-height:14px;color:#1a1a1a;left:34.8px;width:400px;text-align:right;">146</div>
<div class="c" style="top:622.55px;font-size:14px;line-height:14px;color:#1a1a1a;left:99.5px;width:129px;overflow:hidden;padding-bottom:5px;white-space:nowrap;">calendar</div>
<div class="c" style="top:622.55px;font-size:14px;line-height:14px;color:#1a1a1a;left:72.9px;width:400px;text-align:center;">5</div>
<div class="c" style="top:622.55px;font-size:14px;line-height:14px;color:#1a1a1a;left:34.8px;width:400px;text-align:right;">249</div>
<div class="c" style="top:643.55px;font-size:14px;line-height:14px;color:#1a1a1a;left:99.5px;width:129px;overflow:hidden;padding-bottom:5px;white-space:nowrap;">social</div>
<div class="c" style="top:643.55px;font-size:14px;line-height:14px;color:#1a1a1a;left:72.9px;width:400px;text-align:center;">5</div>
<div class="c" style="top:643.55px;font-size:14px;line-height:14px;color:#1a1a1a;left:34.8px;width:400px;text-align:right;">253</div>
<div class="c" style="top:664.55px;font-size:14px;line-height:14px;color:#1a1a1a;left:99.5px;width:129px;overflow:hidden;padding-bottom:5px;white-space:nowrap;">media</div>
<div class="c" style="top:664.55px;font-size:14px;line-height:14px;color:#1a1a1a;left:72.9px;width:400px;text-align:center;">5</div>
<div class="c" style="top:664.55px;font-size:14px;line-height:14px;color:#1a1a1a;left:34.8px;width:400px;text-align:right;">253</div>
<div class="c" style="top:685.55px;font-size:14px;line-height:14px;color:#1a1a1a;left:99.5px;width:129px;overflow:hidden;padding-bottom:5px;white-space:nowrap;">page</div>
<div class="c" style="top:685.55px;font-size:14px;line-height:14px;color:#1a1a1a;left:72.9px;width:400px;text-align:center;">5</div>
<div class="c" style="top:685.55px;font-size:14px;line-height:14px;color:#1a1a1a;left:34.8px;width:400px;text-align:right;">533</div>
<div class="c" style="top:706.55px;font-size:14px;line-height:14px;color:#1a1a1a;left:99.5px;width:129px;overflow:hidden;padding-bottom:5px;white-space:nowrap;">audit</div>
<div class="c" style="top:706.55px;font-size:14px;line-height:14px;color:#1a1a1a;left:72.9px;width:400px;text-align:center;">5</div>
<div class="c" style="top:706.55px;font-size:14px;line-height:14px;color:#1a1a1a;left:34.8px;width:400px;text-align:right;">213</div>
<div class="c" style="top:727.55px;font-size:14px;line-height:14px;color:#1a1a1a;left:99.5px;width:129px;overflow:hidden;padding-bottom:5px;white-space:nowrap;">video</div>
<div class="c" style="top:727.55px;font-size:14px;line-height:14px;color:#1a1a1a;left:72.9px;width:400px;text-align:center;">5</div>
<div class="c" style="top:727.55px;font-size:14px;line-height:14px;color:#1a1a1a;left:34.8px;width:400px;text-align:right;">173</div>
<div class="c" style="top:748.55px;font-size:14px;line-height:14px;color:#1a1a1a;left:99.5px;width:129px;overflow:hidden;padding-bottom:5px;white-space:nowrap;">vs</div>
<div class="c" style="top:748.55px;font-size:14px;line-height:14px;color:#1a1a1a;left:72.9px;width:400px;text-align:center;">4</div>
<div class="c" style="top:748.55px;font-size:14px;line-height:14px;color:#1a1a1a;left:34.8px;width:400px;text-align:right;">275</div>
<div class="c" style="top:769.55px;font-size:14px;line-height:14px;color:#1a1a1a;left:99.5px;width:129px;overflow:hidden;padding-bottom:5px;white-space:nowrap;">building</div>
<div class="c" style="top:769.55px;font-size:14px;line-height:14px;color:#1a1a1a;left:72.9px;width:400px;text-align:center;">4</div>
<div class="c" style="top:769.55px;font-size:14px;line-height:14px;color:#1a1a1a;left:34.8px;width:400px;text-align:right;">82</div>
<div class="c" style="top:790.55px;font-size:14px;line-height:14px;color:#1a1a1a;left:99.5px;width:129px;overflow:hidden;padding-bottom:5px;white-space:nowrap;">blog</div>
<div class="c" style="top:790.55px;font-size:14px;line-height:14px;color:#1a1a1a;left:72.9px;width:400px;text-align:center;">4</div>
<div class="c" style="top:790.55px;font-size:14px;line-height:14px;color:#1a1a1a;left:34.8px;width:400px;text-align:right;">248</div>
<div class="c" style="top:811.55px;font-size:14px;line-height:14px;color:#1a1a1a;left:99.5px;width:129px;overflow:hidden;padding-bottom:5px;white-space:nowrap;">tool</div>
<div class="c" style="top:811.55px;font-size:14px;line-height:14px;color:#1a1a1a;left:72.9px;width:400px;text-align:center;">4</div>
<div class="c" style="top:811.55px;font-size:14px;line-height:14px;color:#1a1a1a;left:34.8px;width:400px;text-align:right;">155</div>
<div class="c" style="top:832.55px;font-size:14px;line-height:14px;color:#1a1a1a;left:99.5px;width:129px;overflow:hidden;padding-bottom:5px;white-space:nowrap;">writing</div>
<div class="c" style="top:832.55px;font-size:14px;line-height:14px;color:#1a1a1a;left:72.9px;width:400px;text-align:center;">4</div>
<div class="c" style="top:832.55px;font-size:14px;line-height:14px;color:#1a1a1a;left:34.8px;width:400px;text-align:right;">730</div>
<div class="c" style="top:853.55px;font-size:14px;line-height:14px;color:#1a1a1a;left:99.5px;width:129px;overflow:hidden;padding-bottom:5px;white-space:nowrap;">serp</div>
<div class="c" style="top:853.55px;font-size:14px;line-height:14px;color:#1a1a1a;left:72.9px;width:400px;text-align:center;">4</div>
<div class="c" style="top:853.55px;font-size:14px;line-height:14px;color:#1a1a1a;left:34.8px;width:400px;text-align:right;">431</div>
<div class="c" style="top:874.55px;font-size:14px;line-height:14px;color:#1a1a1a;left:99.5px;width:129px;overflow:hidden;padding-bottom:5px;white-space:nowrap;">sales</div>
<div class="c" style="top:874.55px;font-size:14px;line-height:14px;color:#1a1a1a;left:72.9px;width:400px;text-align:center;">4</div>
<div class="c" style="top:874.55px;font-size:14px;line-height:14px;color:#1a1a1a;left:34.8px;width:400px;text-align:right;">125</div>
<div class="c" style="top:895.55px;font-size:14px;line-height:14px;color:#1a1a1a;left:99.5px;width:129px;overflow:hidden;padding-bottom:5px;white-space:nowrap;">tesla</div>
<div class="c" style="top:895.55px;font-size:14px;line-height:14px;color:#1a1a1a;left:72.9px;width:400px;text-align:center;">4</div>
<div class="c" style="top:895.55px;font-size:14px;line-height:14px;color:#1a1a1a;left:34.8px;width:400px;text-align:right;">120</div>
<div style="left:94px;top:217px;width:346.3px;height:24px;background:#000;"></div>
<div style="top:222.03px;font-size:13.9px;line-height:13.9px;color:#fff;font-weight:700;left:-37.5px;width:400px;text-align:center;">Pattern</div>
<div style="top:222.03px;font-size:13.9px;line-height:13.9px;color:#fff;font-weight:700;left:72px;width:400px;text-align:center;">Count</div>
<div style="top:222.03px;font-size:13.9px;line-height:13.9px;color:#fff;font-weight:700;left:177px;width:400px;text-align:center;">Clicks (SUM)</div>
<div style="left:94px;top:184.9px;width:346.3px;height:2.6px;background:#686868;"></div>
<div style="left:94px;top:185px;width:2.35px;height:32px;background:#686868;"></div>
<div style="left:438px;top:185px;width:2.4px;height:32px;background:#686868;"></div>
<div style="left:94px;top:241px;width:2.35px;height:676px;background:#686868;"></div>
<div style="left:438px;top:241px;width:2.4px;height:676px;background:#686868;"></div>
<div style="left:489px;top:186px;width:345px;height:731px;background:#fff;"></div>
<div style="left:489px;top:186px;width:345px;height:32px;background:#f3f3f3;"></div>
<div style="top:196.19px;font-size:16.2px;line-height:16.2px;color:#000;font-weight:700;letter-spacing:0.22px;left:461.5px;width:400px;text-align:center;">Two-Word Patterns</div>
<div style="left:709px;top:241px;width:124px;height:21px;background:#a0d9bd;"></div>
<div style="left:709px;top:262px;width:124px;height:21px;background:#cceadb;"></div>
<div style="left:709px;top:283px;width:124px;height:21px;background:#b2e0c9;"></div>
<div style="left:709px;top:304px;width:124px;height:21px;background:#c4e7d6;"></div>
<div style="left:709px;top:325px;width:124px;height:21px;background:#89cfad;"></div>
<div style="left:709px;top:346px;width:124px;height:21px;background:#cae9da;"></div>
<div style="left:709px;top:367px;width:124px;height:21px;background:#bfe5d3;"></div>
<div style="left:709px;top:388px;width:124px;height:21px;background:#e1f3ea;"></div>
<div style="left:709px;top:409px;width:124px;height:21px;background:#82cca8;"></div>
<div style="left:709px;top:430px;width:124px;height:21px;background:#cceadc;"></div>
<div style="left:709px;top:451px;width:124px;height:21px;background:#e0f2e9;"></div>
<div style="left:709px;top:472px;width:124px;height:21px;background:#f5fbf8;"></div>
<div style="left:709px;top:493px;width:124px;height:21px;background:#f1f9f5;"></div>
<div style="left:709px;top:514px;width:124px;height:21px;background:#57bb8a;"></div>
<div style="left:709px;top:535px;width:124px;height:21px;background:#f1f9f5;"></div>
<div style="left:709px;top:556px;width:124px;height:21px;background:#c8e9d9;"></div>
<div style="left:709px;top:577px;width:124px;height:21px;background:#f1f9f5;"></div>
<div style="left:709px;top:598px;width:124px;height:21px;background:#f6fbf9;"></div>
<div style="left:709px;top:619px;width:124px;height:21px;background:#f1f9f5;"></div>
<div style="left:709px;top:640px;width:124px;height:21px;background:#d9f0e5;"></div>
<div style="left:709px;top:661px;width:124px;height:21px;background:#cbeadb;"></div>
<div style="left:709px;top:682px;width:124px;height:21px;background:#fafdfb;"></div>
<div style="left:709px;top:703px;width:124px;height:21px;background:#e9f6f0;"></div>
<div style="left:709px;top:724px;width:124px;height:21px;background:#fbfdfc;"></div>
<div style="left:709px;top:745px;width:124px;height:21px;background:#e8f6ef;"></div>
<div style="left:709px;top:766px;width:124px;height:21px;background:#dcf1e7;"></div>
<div style="left:709px;top:787px;width:124px;height:21px;background:#fbfdfc;"></div>
<div style="left:709px;top:808px;width:124px;height:21px;background:#fbfdfc;"></div>
<div style="left:709px;top:829px;width:124px;height:21px;background:#f9fcfb;"></div>
<div style="left:709px;top:850px;width:124px;height:21px;background:#d5eee2;"></div>
<div style="left:709px;top:871px;width:124px;height:21px;background:#f6fbf9;"></div>
<div style="left:709px;top:892px;width:124px;height:21px;background:#f8fcfa;"></div>
<div class="c" style="top:244.55px;font-size:14px;line-height:14px;color:#1a1a1a;left:493.5px;width:129px;overflow:hidden;padding-bottom:5px;white-space:nowrap;">keyword research</div>
<div class="c" style="top:244.55px;font-size:14px;line-height:14px;color:#1a1a1a;left:466.9px;width:400px;text-align:center;">6</div>
<div class="c" style="top:244.55px;font-size:14px;line-height:14px;color:#1a1a1a;left:429.25px;width:400px;text-align:right;">394</div>
<div class="c" style="top:265.55px;font-size:14px;line-height:14px;color:#1a1a1a;left:493.5px;width:129px;overflow:hidden;padding-bottom:5px;white-space:nowrap;">ranking factors</div>
<div class="c" style="top:265.55px;font-size:14px;line-height:14px;color:#1a1a1a;left:466.9px;width:400px;text-align:center;">5</div>
<div class="c" style="top:265.55px;font-size:14px;line-height:14px;color:#1a1a1a;left:429.25px;width:400px;text-align:right;">223</div>
<div class="c" style="top:286.55px;font-size:14px;line-height:14px;color:#1a1a1a;left:493.5px;width:129px;overflow:hidden;padding-bottom:5px;white-space:nowrap;">seo tools</div>
<div class="c" style="top:286.55px;font-size:14px;line-height:14px;color:#1a1a1a;left:466.9px;width:400px;text-align:center;">5</div>
<div class="c" style="top:286.55px;font-size:14px;line-height:14px;color:#1a1a1a;left:429.25px;width:400px;text-align:right;">324</div>
<div class="c" style="top:307.55px;font-size:14px;line-height:14px;color:#1a1a1a;left:493.5px;width:129px;overflow:hidden;padding-bottom:5px;white-space:nowrap;">social media</div>
<div class="c" style="top:307.55px;font-size:14px;line-height:14px;color:#1a1a1a;left:466.9px;width:400px;text-align:center;">5</div>
<div class="c" style="top:307.55px;font-size:14px;line-height:14px;color:#1a1a1a;left:429.25px;width:400px;text-align:right;">253</div>
<div class="c" style="top:328.55px;font-size:14px;line-height:14px;color:#1a1a1a;left:493.5px;width:129px;overflow:hidden;padding-bottom:5px;white-space:nowrap;">seo checklist</div>
<div class="c" style="top:328.55px;font-size:14px;line-height:14px;color:#1a1a1a;left:466.9px;width:400px;text-align:center;">5</div>
<div class="c" style="top:328.55px;font-size:14px;line-height:14px;color:#1a1a1a;left:429.25px;width:400px;text-align:right;">485</div>
<div class="c" style="top:349.55px;font-size:14px;line-height:14px;color:#1a1a1a;left:493.5px;width:129px;overflow:hidden;padding-bottom:5px;white-space:nowrap;">content calendar</div>
<div class="c" style="top:349.55px;font-size:14px;line-height:14px;color:#1a1a1a;left:466.9px;width:400px;text-align:center;">4</div>
<div class="c" style="top:349.55px;font-size:14px;line-height:14px;color:#1a1a1a;left:429.25px;width:400px;text-align:right;">231</div>
<div class="c" style="top:370.55px;font-size:14px;line-height:14px;color:#1a1a1a;left:493.5px;width:129px;overflow:hidden;padding-bottom:5px;white-space:nowrap;">strategy template</div>
<div class="c" style="top:370.55px;font-size:14px;line-height:14px;color:#1a1a1a;left:466.9px;width:400px;text-align:center;">4</div>
<div class="c" style="top:370.55px;font-size:14px;line-height:14px;color:#1a1a1a;left:429.25px;width:400px;text-align:right;">272</div>
<div class="c" style="top:391.55px;font-size:14px;line-height:14px;color:#1a1a1a;left:493.5px;width:129px;overflow:hidden;padding-bottom:5px;white-space:nowrap;">seo sem</div>
<div class="c" style="top:391.55px;font-size:14px;line-height:14px;color:#1a1a1a;left:466.9px;width:400px;text-align:center;">4</div>
<div class="c" style="top:391.55px;font-size:14px;line-height:14px;color:#1a1a1a;left:429.25px;width:400px;text-align:right;">138</div>
<div class="c" style="top:412.55px;font-size:14px;line-height:14px;color:#1a1a1a;left:493.5px;width:129px;overflow:hidden;padding-bottom:5px;white-space:nowrap;">page seo</div>
<div class="c" style="top:412.55px;font-size:14px;line-height:14px;color:#1a1a1a;left:466.9px;width:400px;text-align:center;">4</div>
<div class="c" style="top:412.55px;font-size:14px;line-height:14px;color:#1a1a1a;left:429.25px;width:400px;text-align:right;">515</div>
<div class="c" style="top:433.55px;font-size:14px;line-height:14px;color:#1a1a1a;left:493.5px;width:129px;overflow:hidden;padding-bottom:5px;white-space:nowrap;">free seo</div>
<div class="c" style="top:433.55px;font-size:14px;line-height:14px;color:#1a1a1a;left:466.9px;width:400px;text-align:center;">3</div>
<div class="c" style="top:433.55px;font-size:14px;line-height:14px;color:#1a1a1a;left:429.25px;width:400px;text-align:right;">220</div>
<div class="c" style="top:454.55px;font-size:14px;line-height:14px;color:#1a1a1a;left:493.5px;width:129px;overflow:hidden;padding-bottom:5px;white-space:nowrap;">bounce rate</div>
<div class="c" style="top:454.55px;font-size:14px;line-height:14px;color:#1a1a1a;left:466.9px;width:400px;text-align:center;">3</div>
<div class="c" style="top:454.55px;font-size:14px;line-height:14px;color:#1a1a1a;left:429.25px;width:400px;text-align:right;">144</div>
<div class="c" style="top:475.55px;font-size:14px;line-height:14px;color:#1a1a1a;left:493.5px;width:129px;overflow:hidden;padding-bottom:5px;white-space:nowrap;">link building</div>
<div class="c" style="top:475.55px;font-size:14px;line-height:14px;color:#1a1a1a;left:466.9px;width:400px;text-align:center;">3</div>
<div class="c" style="top:475.55px;font-size:14px;line-height:14px;color:#1a1a1a;left:429.25px;width:400px;text-align:right;">60</div>
<div class="c" style="top:496.55px;font-size:14px;line-height:14px;color:#1a1a1a;left:493.5px;width:129px;overflow:hidden;padding-bottom:5px;white-space:nowrap;">calendar template</div>
<div class="c" style="top:496.55px;font-size:14px;line-height:14px;color:#1a1a1a;left:466.9px;width:400px;text-align:center;">3</div>
<div class="c" style="top:496.55px;font-size:14px;line-height:14px;color:#1a1a1a;left:429.25px;width:400px;text-align:right;">77</div>
<div class="c" style="top:517.55px;font-size:14px;line-height:14px;color:#1a1a1a;left:493.5px;width:129px;overflow:hidden;padding-bottom:5px;white-space:nowrap;">content writing</div>
<div class="c" style="top:517.55px;font-size:14px;line-height:14px;color:#1a1a1a;left:466.9px;width:400px;text-align:center;">3</div>
<div class="c" style="top:517.55px;font-size:14px;line-height:14px;color:#1a1a1a;left:429.25px;width:400px;text-align:right;">683</div>
<div class="c" style="top:538.55px;font-size:14px;line-height:14px;color:#1a1a1a;left:493.5px;width:129px;overflow:hidden;padding-bottom:5px;white-space:nowrap;">create backlinks</div>
<div class="c" style="top:538.55px;font-size:14px;line-height:14px;color:#1a1a1a;left:466.9px;width:400px;text-align:center;">3</div>
<div class="c" style="top:538.55px;font-size:14px;line-height:14px;color:#1a1a1a;left:429.25px;width:400px;text-align:right;">75</div>
<div class="c" style="top:559.55px;font-size:14px;line-height:14px;color:#1a1a1a;left:493.5px;width:129px;overflow:hidden;padding-bottom:5px;white-space:nowrap;">keyword planner</div>
<div class="c" style="top:559.55px;font-size:14px;line-height:14px;color:#1a1a1a;left:466.9px;width:400px;text-align:center;">3</div>
<div class="c" style="top:559.55px;font-size:14px;line-height:14px;color:#1a1a1a;left:429.25px;width:400px;text-align:right;">238</div>
<div class="c" style="top:580.55px;font-size:14px;line-height:14px;color:#1a1a1a;left:493.5px;width:129px;overflow:hidden;padding-bottom:5px;white-space:nowrap;">watch time</div>
<div class="c" style="top:580.55px;font-size:14px;line-height:14px;color:#1a1a1a;left:466.9px;width:400px;text-align:center;">3</div>
<div class="c" style="top:580.55px;font-size:14px;line-height:14px;color:#1a1a1a;left:429.25px;width:400px;text-align:right;">77</div>
<div class="c" style="top:601.55px;font-size:14px;line-height:14px;color:#1a1a1a;left:493.5px;width:129px;overflow:hidden;padding-bottom:5px;white-space:nowrap;">onpage seo</div>
<div class="c" style="top:601.55px;font-size:14px;line-height:14px;color:#1a1a1a;left:466.9px;width:400px;text-align:center;">3</div>
<div class="c" style="top:601.55px;font-size:14px;line-height:14px;color:#1a1a1a;left:429.25px;width:400px;text-align:right;">56</div>
<div class="c" style="top:622.55px;font-size:14px;line-height:14px;color:#1a1a1a;left:493.5px;width:129px;overflow:hidden;padding-bottom:5px;white-space:nowrap;">plan template</div>
<div class="c" style="top:622.55px;font-size:14px;line-height:14px;color:#1a1a1a;left:466.9px;width:400px;text-align:center;">3</div>
<div class="c" style="top:622.55px;font-size:14px;line-height:14px;color:#1a1a1a;left:429.25px;width:400px;text-align:right;">75</div>
<div class="c" style="top:643.55px;font-size:14px;line-height:14px;color:#1a1a1a;left:493.5px;width:129px;overflow:hidden;padding-bottom:5px;white-space:nowrap;">seo audit</div>
<div class="c" style="top:643.55px;font-size:14px;line-height:14px;color:#1a1a1a;left:466.9px;width:400px;text-align:center;">3</div>
<div class="c" style="top:643.55px;font-size:14px;line-height:14px;color:#1a1a1a;left:429.25px;width:400px;text-align:right;">169</div>
<div class="c" style="top:664.55px;font-size:14px;line-height:14px;color:#1a1a1a;left:493.5px;width:129px;overflow:hidden;padding-bottom:5px;white-space:nowrap;">seo strategy</div>
<div class="c" style="top:664.55px;font-size:14px;line-height:14px;color:#1a1a1a;left:466.9px;width:400px;text-align:center;">3</div>
<div class="c" style="top:664.55px;font-size:14px;line-height:14px;color:#1a1a1a;left:429.25px;width:400px;text-align:right;">225</div>
<div class="c" style="top:685.55px;font-size:14px;line-height:14px;color:#1a1a1a;left:493.5px;width:129px;overflow:hidden;padding-bottom:5px;white-space:nowrap;">NUM ranking</div>
<div class="c" style="top:685.55px;font-size:14px;line-height:14px;color:#1a1a1a;left:466.9px;width:400px;text-align:center;">2</div>
<div class="c" style="top:685.55px;font-size:14px;line-height:14px;color:#1a1a1a;left:429.25px;width:400px;text-align:right;">41</div>
<div class="c" style="top:706.55px;font-size:14px;line-height:14px;color:#1a1a1a;left:493.5px;width:129px;overflow:hidden;padding-bottom:5px;white-space:nowrap;">seo tips</div>
<div class="c" style="top:706.55px;font-size:14px;line-height:14px;color:#1a1a1a;left:466.9px;width:400px;text-align:center;">2</div>
<div class="c" style="top:706.55px;font-size:14px;line-height:14px;color:#1a1a1a;left:429.25px;width:400px;text-align:right;">107</div>
<div class="c" style="top:727.55px;font-size:14px;line-height:14px;color:#1a1a1a;left:493.5px;width:129px;overflow:hidden;padding-bottom:5px;white-space:nowrap;">backlink seo</div>
<div class="c" style="top:727.55px;font-size:14px;line-height:14px;color:#1a1a1a;left:466.9px;width:400px;text-align:center;">2</div>
<div class="c" style="top:727.55px;font-size:14px;line-height:14px;color:#1a1a1a;left:429.25px;width:400px;text-align:right;">36</div>
<div class="c" style="top:748.55px;font-size:14px;line-height:14px;color:#1a1a1a;left:493.5px;width:129px;overflow:hidden;padding-bottom:5px;white-space:nowrap;">research tool</div>
<div class="c" style="top:748.55px;font-size:14px;line-height:14px;color:#1a1a1a;left:466.9px;width:400px;text-align:center;">2</div>
<div class="c" style="top:748.55px;font-size:14px;line-height:14px;color:#1a1a1a;left:429.25px;width:400px;text-align:right;">110</div>
<div class="c" style="top:769.55px;font-size:14px;line-height:14px;color:#1a1a1a;left:493.5px;width:129px;overflow:hidden;padding-bottom:5px;white-space:nowrap;">brian dean</div>
<div class="c" style="top:769.55px;font-size:14px;line-height:14px;color:#1a1a1a;left:466.9px;width:400px;text-align:center;">2</div>
<div class="c" style="top:769.55px;font-size:14px;line-height:14px;color:#1a1a1a;left:429.25px;width:400px;text-align:right;">157</div>
<div class="c" style="top:790.55px;font-size:14px;line-height:14px;color:#1a1a1a;left:493.5px;width:129px;overflow:hidden;padding-bottom:5px;white-space:nowrap;">template google</div>
<div class="c" style="top:790.55px;font-size:14px;line-height:14px;color:#1a1a1a;left:466.9px;width:400px;text-align:center;">2</div>
<div class="c" style="top:790.55px;font-size:14px;line-height:14px;color:#1a1a1a;left:429.25px;width:400px;text-align:right;">36</div>
<div class="c" style="top:811.55px;font-size:14px;line-height:14px;color:#1a1a1a;left:493.5px;width:129px;overflow:hidden;padding-bottom:5px;white-space:nowrap;">google sheets</div>
<div class="c" style="top:811.55px;font-size:14px;line-height:14px;color:#1a1a1a;left:466.9px;width:400px;text-align:center;">2</div>
<div class="c" style="top:811.55px;font-size:14px;line-height:14px;color:#1a1a1a;left:429.25px;width:400px;text-align:right;">36</div>
<div class="c" style="top:832.55px;font-size:14px;line-height:14px;color:#1a1a1a;left:493.5px;width:129px;overflow:hidden;padding-bottom:5px;white-space:nowrap;">seo tool</div>
<div class="c" style="top:832.55px;font-size:14px;line-height:14px;color:#1a1a1a;left:466.9px;width:400px;text-align:center;">2</div>
<div class="c" style="top:832.55px;font-size:14px;line-height:14px;color:#1a1a1a;left:429.25px;width:400px;text-align:right;">45</div>
<div class="c" style="top:853.55px;font-size:14px;line-height:14px;color:#1a1a1a;left:493.5px;width:129px;overflow:hidden;padding-bottom:5px;white-space:nowrap;">google keyword</div>
<div class="c" style="top:853.55px;font-size:14px;line-height:14px;color:#1a1a1a;left:466.9px;width:400px;text-align:center;">2</div>
<div class="c" style="top:853.55px;font-size:14px;line-height:14px;color:#1a1a1a;left:429.25px;width:400px;text-align:right;">184</div>
<div class="c" style="top:874.55px;font-size:14px;line-height:14px;color:#1a1a1a;left:493.5px;width:129px;overflow:hidden;padding-bottom:5px;white-space:nowrap;">google seo</div>
<div class="c" style="top:874.55px;font-size:14px;line-height:14px;color:#1a1a1a;left:466.9px;width:400px;text-align:center;">2</div>
<div class="c" style="top:874.55px;font-size:14px;line-height:14px;color:#1a1a1a;left:429.25px;width:400px;text-align:right;">55</div>
<div class="c" style="top:895.55px;font-size:14px;line-height:14px;color:#1a1a1a;left:493.5px;width:129px;overflow:hidden;padding-bottom:5px;white-space:nowrap;">many people</div>
<div class="c" style="top:895.55px;font-size:14px;line-height:14px;color:#1a1a1a;left:466.9px;width:400px;text-align:center;">2</div>
<div class="c" style="top:895.55px;font-size:14px;line-height:14px;color:#1a1a1a;left:429.25px;width:400px;text-align:right;">46</div>
<div style="left:489px;top:217.5px;width:345px;height:1.5px;background:#8a8a8a;"></div>
<div style="left:488px;top:219px;width:346.3px;height:22px;background:#000;"></div>
<div style="top:224.23px;font-size:13.9px;line-height:13.9px;color:#fff;font-weight:700;left:356.5px;width:400px;text-align:center;">Pattern</div>
<div style="top:224.23px;font-size:13.9px;line-height:13.9px;color:#fff;font-weight:700;left:466px;width:400px;text-align:center;">Count</div>
<div style="top:222.03px;font-size:13.9px;line-height:13.9px;color:#fff;font-weight:700;left:571px;width:400px;text-align:center;">Clicks (SUM)</div>
<div style="left:488px;top:184.9px;width:346.3px;height:2.6px;background:#686868;"></div>
<div style="left:488px;top:185px;width:2.35px;height:34px;background:#686868;"></div>
<div style="left:832.3px;top:185px;width:2.4px;height:34px;background:#686868;"></div>
<div style="left:488px;top:241px;width:2.35px;height:676px;background:#686868;"></div>
<div style="left:832.3px;top:241px;width:2.4px;height:676px;background:#686868;"></div>
<div style="left:883px;top:186px;width:345px;height:731px;background:#fff;"></div>
<div style="left:883px;top:186px;width:345px;height:32px;background:#f3f3f3;"></div>
<div style="top:196.19px;font-size:16.2px;line-height:16.2px;color:#000;font-weight:700;letter-spacing:0.22px;left:855.5px;width:400px;text-align:center;">Three-Word Patterns</div>
<div style="left:1103px;top:241px;width:124px;height:21px;background:#e7f5ee;"></div>
<div style="left:1103px;top:262px;width:124px;height:21px;background:#57bb8a;"></div>
<div style="left:1103px;top:283px;width:124px;height:21px;background:#a9dcc3;"></div>
<div style="left:1103px;top:304px;width:124px;height:21px;background:#d7efe3;"></div>
<div style="left:1103px;top:325px;width:124px;height:21px;background:#ebf7f1;"></div>
<div style="left:1103px;top:346px;width:124px;height:21px;background:#ebf7f1;"></div>
<div style="left:1103px;top:367px;width:124px;height:21px;background:#66c195;"></div>
<div style="left:1103px;top:388px;width:124px;height:21px;background:#e2f3eb;"></div>
<div style="left:1103px;top:409px;width:124px;height:21px;background:#8ed1b0;"></div>
<div style="left:1103px;top:430px;width:124px;height:21px;background:#dcf1e7;"></div>
<div style="left:1103px;top:451px;width:124px;height:21px;background:#d9f0e5;"></div>
<div style="left:1103px;top:472px;width:124px;height:21px;background:#61bf91;"></div>
<div style="left:1103px;top:493px;width:124px;height:21px;background:#61bf91;"></div>
<div style="left:1103px;top:514px;width:124px;height:21px;background:#d7efe3;"></div>
<div style="left:1103px;top:535px;width:124px;height:21px;background:#d7efe3;"></div>
<div style="left:1103px;top:556px;width:124px;height:21px;background:#d7efe3;"></div>
<div style="left:1103px;top:577px;width:124px;height:21px;background:#eef8f3;"></div>
<div style="left:1103px;top:598px;width:124px;height:21px;background:#99d6b8;"></div>
<div style="left:1103px;top:619px;width:124px;height:21px;background:#eaf7f1;"></div>
<div style="left:1103px;top:640px;width:124px;height:21px;background:#d3ede0;"></div>
<div style="left:1103px;top:661px;width:124px;height:21px;background:#c0e6d3;"></div>
<div style="left:1103px;top:682px;width:124px;height:21px;background:#addec6;"></div>
<div style="left:1103px;top:703px;width:124px;height:21px;background:#def2e8;"></div>
<div style="left:1103px;top:724px;width:124px;height:21px;background:#f3faf7;"></div>
<div style="left:1103px;top:745px;width:124px;height:21px;background:#f9fcfb;"></div>
<div style="left:1103px;top:766px;width:124px;height:21px;background:#f2faf6;"></div>
<div style="left:1103px;top:787px;width:124px;height:21px;background:#e8f6ef;"></div>
<div style="left:1103px;top:808px;width:124px;height:21px;background:#d5eee2;"></div>
<div style="left:1103px;top:829px;width:124px;height:21px;background:#fbfdfc;"></div>
<div style="left:1103px;top:850px;width:124px;height:21px;background:#e8f6ef;"></div>
<div style="left:1103px;top:871px;width:124px;height:21px;background:#fbfdfc;"></div>
<div style="left:1103px;top:892px;width:124px;height:21px;background:#f8fcfa;"></div>
<div class="c" style="top:244.55px;font-size:14px;line-height:14px;color:#1a1a1a;left:887.5px;width:129px;overflow:hidden;padding-bottom:5px;white-space:nowrap;">NUM ranking factors</div>
<div class="c" style="top:244.55px;font-size:14px;line-height:14px;color:#1a1a1a;left:860.9px;width:400px;text-align:center;">2</div>
<div class="c" style="top:244.55px;font-size:14px;line-height:14px;color:#1a1a1a;left:823.25px;width:400px;text-align:right;">41</div>
<div class="c" style="top:265.55px;font-size:14px;line-height:14px;color:#1a1a1a;left:887.5px;width:129px;overflow:hidden;padding-bottom:5px;white-space:nowrap;">free seo tools</div>
<div class="c" style="top:265.55px;font-size:14px;line-height:14px;color:#1a1a1a;left:860.9px;width:400px;text-align:center;">2</div>
<div class="c" style="top:265.55px;font-size:14px;line-height:14px;color:#1a1a1a;left:823.25px;width:400px;text-align:right;">201</div>
<div class="c" style="top:286.55px;font-size:14px;line-height:14px;color:#1a1a1a;left:887.5px;width:129px;overflow:hidden;padding-bottom:5px;white-space:nowrap;">keyword research tool</div>
<div class="c" style="top:286.55px;font-size:14px;line-height:14px;color:#1a1a1a;left:860.9px;width:400px;text-align:center;">2</div>
<div class="c" style="top:286.55px;font-size:14px;line-height:14px;color:#1a1a1a;left:823.25px;width:400px;text-align:right;">110</div>
<div class="c" style="top:307.55px;font-size:14px;line-height:14px;color:#1a1a1a;left:887.5px;width:129px;overflow:hidden;padding-bottom:5px;white-space:nowrap;">content calendar template</div>
<div class="c" style="top:307.55px;font-size:14px;line-height:14px;color:#1a1a1a;left:860.9px;width:400px;text-align:center;">2</div>
<div class="c" style="top:307.55px;font-size:14px;line-height:14px;color:#1a1a1a;left:823.25px;width:400px;text-align:right;">59</div>
<div class="c" style="top:328.55px;font-size:14px;line-height:14px;color:#1a1a1a;left:887.5px;width:129px;overflow:hidden;padding-bottom:5px;white-space:nowrap;">calendar template google</div>
<div class="c" style="top:328.55px;font-size:14px;line-height:14px;color:#1a1a1a;left:860.9px;width:400px;text-align:center;">2</div>
<div class="c" style="top:328.55px;font-size:14px;line-height:14px;color:#1a1a1a;left:823.25px;width:400px;text-align:right;">36</div>
<div class="c" style="top:349.55px;font-size:14px;line-height:14px;color:#1a1a1a;left:887.5px;width:129px;overflow:hidden;padding-bottom:5px;white-space:nowrap;">template google sheets</div>
<div class="c" style="top:349.55px;font-size:14px;line-height:14px;color:#1a1a1a;left:860.9px;width:400px;text-align:center;">2</div>
<div class="c" style="top:349.55px;font-size:14px;line-height:14px;color:#1a1a1a;left:823.25px;width:400px;text-align:right;">36</div>
<div class="c" style="top:370.55px;font-size:14px;line-height:14px;color:#1a1a1a;left:887.5px;width:129px;overflow:hidden;padding-bottom:5px;white-space:nowrap;">google keyword planner</div>
<div class="c" style="top:370.55px;font-size:14px;line-height:14px;color:#1a1a1a;left:860.9px;width:400px;text-align:center;">2</div>
<div class="c" style="top:370.55px;font-size:14px;line-height:14px;color:#1a1a1a;left:823.25px;width:400px;text-align:right;">184</div>
<div class="c" style="top:391.55px;font-size:14px;line-height:14px;color:#1a1a1a;left:887.5px;width:129px;overflow:hidden;padding-bottom:5px;white-space:nowrap;">many people use</div>
<div class="c" style="top:391.55px;font-size:14px;line-height:14px;color:#1a1a1a;left:860.9px;width:400px;text-align:center;">2</div>
<div class="c" style="top:391.55px;font-size:14px;line-height:14px;color:#1a1a1a;left:823.25px;width:400px;text-align:right;">46</div>
<div class="c" style="top:412.55px;font-size:14px;line-height:14px;color:#1a1a1a;left:887.5px;width:129px;overflow:hidden;padding-bottom:5px;white-space:nowrap;">keyword research tools</div>
<div class="c" style="top:412.55px;font-size:14px;line-height:14px;color:#1a1a1a;left:860.9px;width:400px;text-align:center;">2</div>
<div class="c" style="top:412.55px;font-size:14px;line-height:14px;color:#1a1a1a;left:823.25px;width:400px;text-align:right;">140</div>
<div class="c" style="top:433.55px;font-size:14px;line-height:14px;color:#1a1a1a;left:887.5px;width:129px;overflow:hidden;padding-bottom:5px;white-space:nowrap;">multi watch time</div>
<div class="c" style="top:433.55px;font-size:14px;line-height:14px;color:#1a1a1a;left:860.9px;width:400px;text-align:center;">2</div>
<div class="c" style="top:433.55px;font-size:14px;line-height:14px;color:#1a1a1a;left:823.25px;width:400px;text-align:right;">53</div>
<div class="c" style="top:454.55px;font-size:14px;line-height:14px;color:#1a1a1a;left:887.5px;width:129px;overflow:hidden;padding-bottom:5px;white-space:nowrap;">seo ranking factors</div>
<div class="c" style="top:454.55px;font-size:14px;line-height:14px;color:#1a1a1a;left:860.9px;width:400px;text-align:center;">2</div>
<div class="c" style="top:454.55px;font-size:14px;line-height:14px;color:#1a1a1a;left:823.25px;width:400px;text-align:right;">56</div>
<div class="c" style="top:475.55px;font-size:14px;line-height:14px;color:#1a1a1a;left:887.5px;width:129px;overflow:hidden;padding-bottom:5px;white-space:nowrap;">social media strategy</div>
<div class="c" style="top:475.55px;font-size:14px;line-height:14px;color:#1a1a1a;left:860.9px;width:400px;text-align:center;">2</div>
<div class="c" style="top:475.55px;font-size:14px;line-height:14px;color:#1a1a1a;left:823.25px;width:400px;text-align:right;">190</div>
<div class="c" style="top:496.55px;font-size:14px;line-height:14px;color:#1a1a1a;left:887.5px;width:129px;overflow:hidden;padding-bottom:5px;white-space:nowrap;">media strategy template</div>
<div class="c" style="top:496.55px;font-size:14px;line-height:14px;color:#1a1a1a;left:860.9px;width:400px;text-align:center;">2</div>
<div class="c" style="top:496.55px;font-size:14px;line-height:14px;color:#1a1a1a;left:823.25px;width:400px;text-align:right;">190</div>
<div class="c" style="top:517.55px;font-size:14px;line-height:14px;color:#1a1a1a;left:887.5px;width:129px;overflow:hidden;padding-bottom:5px;white-space:nowrap;">actionable seo tips</div>
<div class="c" style="top:517.55px;font-size:14px;line-height:14px;color:#1a1a1a;left:860.9px;width:400px;text-align:center;">1</div>
<div class="c" style="top:517.55px;font-size:14px;line-height:14px;color:#1a1a1a;left:823.25px;width:400px;text-align:right;">58</div>
<div class="c" style="top:538.55px;font-size:14px;line-height:14px;color:#1a1a1a;left:887.5px;width:129px;overflow:hidden;padding-bottom:5px;white-space:nowrap;">seo tips strategies</div>
<div class="c" style="top:538.55px;font-size:14px;line-height:14px;color:#1a1a1a;left:860.9px;width:400px;text-align:center;">1</div>
<div class="c" style="top:538.55px;font-size:14px;line-height:14px;color:#1a1a1a;left:823.25px;width:400px;text-align:right;">58</div>
<div class="c" style="top:559.55px;font-size:14px;line-height:14px;color:#1a1a1a;left:887.5px;width:129px;overflow:hidden;padding-bottom:5px;white-space:nowrap;">tips strategies digitech</div>
<div class="c" style="top:559.55px;font-size:14px;line-height:14px;color:#1a1a1a;left:860.9px;width:400px;text-align:center;">1</div>
<div class="c" style="top:559.55px;font-size:14px;line-height:14px;color:#1a1a1a;left:823.25px;width:400px;text-align:right;">58</div>
<div class="c" style="top:580.55px;font-size:14px;line-height:14px;color:#1a1a1a;left:887.5px;width:129px;overflow:hidden;padding-bottom:5px;white-space:nowrap;">ahrefs free alternative</div>
<div class="c" style="top:580.55px;font-size:14px;line-height:14px;color:#1a1a1a;left:860.9px;width:400px;text-align:center;">1</div>
<div class="c" style="top:580.55px;font-size:14px;line-height:14px;color:#1a1a1a;left:823.25px;width:400px;text-align:right;">33</div>
<div class="c" style="top:601.55px;font-size:14px;line-height:14px;color:#1a1a1a;left:887.5px;width:129px;overflow:hidden;padding-bottom:5px;white-space:nowrap;">ahrefs vs semrush</div>
<div class="c" style="top:601.55px;font-size:14px;line-height:14px;color:#1a1a1a;left:860.9px;width:400px;text-align:center;">1</div>
<div class="c" style="top:601.55px;font-size:14px;line-height:14px;color:#1a1a1a;left:823.25px;width:400px;text-align:right;">128</div>
<div class="c" style="top:622.55px;font-size:14px;line-height:14px;color:#1a1a1a;left:887.5px;width:129px;overflow:hidden;padding-bottom:5px;white-space:nowrap;">backlinko seo guide</div>
<div class="c" style="top:622.55px;font-size:14px;line-height:14px;color:#1a1a1a;left:860.9px;width:400px;text-align:center;">1</div>
<div class="c" style="top:622.55px;font-size:14px;line-height:14px;color:#1a1a1a;left:823.25px;width:400px;text-align:right;">37</div>
<div class="c" style="top:643.55px;font-size:14px;line-height:14px;color:#1a1a1a;left:887.5px;width:129px;overflow:hidden;padding-bottom:5px;white-space:nowrap;">best free seo</div>
<div class="c" style="top:643.55px;font-size:14px;line-height:14px;color:#1a1a1a;left:860.9px;width:400px;text-align:center;">1</div>
<div class="c" style="top:643.55px;font-size:14px;line-height:14px;color:#1a1a1a;left:823.25px;width:400px;text-align:right;">63</div>
<div class="c" style="top:664.55px;font-size:14px;line-height:14px;color:#1a1a1a;left:887.5px;width:129px;overflow:hidden;padding-bottom:5px;white-space:nowrap;">best keyword research</div>
<div class="c" style="top:664.55px;font-size:14px;line-height:14px;color:#1a1a1a;left:860.9px;width:400px;text-align:center;">1</div>
<div class="c" style="top:664.55px;font-size:14px;line-height:14px;color:#1a1a1a;left:823.25px;width:400px;text-align:right;">84</div>
<div class="c" style="top:685.55px;font-size:14px;line-height:14px;color:#1a1a1a;left:887.5px;width:129px;overflow:hidden;padding-bottom:5px;white-space:nowrap;">blog post template</div>
<div class="c" style="top:685.55px;font-size:14px;line-height:14px;color:#1a1a1a;left:860.9px;width:400px;text-align:center;">1</div>
<div class="c" style="top:685.55px;font-size:14px;line-height:14px;color:#1a1a1a;left:823.25px;width:400px;text-align:right;">105</div>
<div class="c" style="top:706.55px;font-size:14px;line-height:14px;color:#1a1a1a;left:887.5px;width:129px;overflow:hidden;padding-bottom:5px;white-space:nowrap;">bounce rate meaning</div>
<div class="c" style="top:706.55px;font-size:14px;line-height:14px;color:#1a1a1a;left:860.9px;width:400px;text-align:center;">1</div>
<div class="c" style="top:706.55px;font-size:14px;line-height:14px;color:#1a1a1a;left:823.25px;width:400px;text-align:right;">51</div>
<div class="c" style="top:727.55px;font-size:14px;line-height:14px;color:#1a1a1a;left:887.5px;width:129px;overflow:hidden;padding-bottom:5px;white-space:nowrap;">brian dean seo</div>
<div class="c" style="top:727.55px;font-size:14px;line-height:14px;color:#1a1a1a;left:860.9px;width:400px;text-align:center;">1</div>
<div class="c" style="top:727.55px;font-size:14px;line-height:14px;color:#1a1a1a;left:823.25px;width:400px;text-align:right;">27</div>
<div class="c" style="top:748.55px;font-size:14px;line-height:14px;color:#1a1a1a;left:887.5px;width:129px;overflow:hidden;padding-bottom:5px;white-space:nowrap;">broken link building</div>
<div class="c" style="top:748.55px;font-size:14px;line-height:14px;color:#1a1a1a;left:860.9px;width:400px;text-align:center;">1</div>
<div class="c" style="top:748.55px;font-size:14px;line-height:14px;color:#1a1a1a;left:823.25px;width:400px;text-align:right;">21</div>
<div class="c" style="top:769.55px;font-size:14px;line-height:14px;color:#1a1a1a;left:887.5px;width:129px;overflow:hidden;padding-bottom:5px;white-space:nowrap;">content gap analysis</div>
<div class="c" style="top:769.55px;font-size:14px;line-height:14px;color:#1a1a1a;left:860.9px;width:400px;text-align:center;">1</div>
<div class="c" style="top:769.55px;font-size:14px;line-height:14px;color:#1a1a1a;left:823.25px;width:400px;text-align:right;">29</div>
<div class="c" style="top:790.55px;font-size:14px;line-height:14px;color:#1a1a1a;left:887.5px;width:129px;overflow:hidden;padding-bottom:5px;white-space:nowrap;">content strategy template</div>
<div class="c" style="top:790.55px;font-size:14px;line-height:14px;color:#1a1a1a;left:860.9px;width:400px;text-align:center;">1</div>
<div class="c" style="top:790.55px;font-size:14px;line-height:14px;color:#1a1a1a;left:823.25px;width:400px;text-align:right;">40</div>
<div class="c" style="top:811.55px;font-size:14px;line-height:14px;color:#1a1a1a;left:887.5px;width:129px;overflow:hidden;padding-bottom:5px;white-space:nowrap;">core web vitals</div>
<div class="c" style="top:811.55px;font-size:14px;line-height:14px;color:#1a1a1a;left:860.9px;width:400px;text-align:center;">1</div>
<div class="c" style="top:811.55px;font-size:14px;line-height:14px;color:#1a1a1a;left:823.25px;width:400px;text-align:right;">61</div>
<div class="c" style="top:832.55px;font-size:14px;line-height:14px;color:#1a1a1a;left:887.5px;width:129px;overflow:hidden;padding-bottom:5px;white-space:nowrap;">daily vlog keywords</div>
<div class="c" style="top:832.55px;font-size:14px;line-height:14px;color:#1a1a1a;left:860.9px;width:400px;text-align:center;">1</div>
<div class="c" style="top:832.55px;font-size:14px;line-height:14px;color:#1a1a1a;left:823.25px;width:400px;text-align:right;">19</div>
<div class="c" style="top:853.55px;font-size:14px;line-height:14px;color:#1a1a1a;left:887.5px;width:129px;overflow:hidden;padding-bottom:5px;white-space:nowrap;">difference seo sem</div>
<div class="c" style="top:853.55px;font-size:14px;line-height:14px;color:#1a1a1a;left:860.9px;width:400px;text-align:center;">1</div>
<div class="c" style="top:853.55px;font-size:14px;line-height:14px;color:#1a1a1a;left:823.25px;width:400px;text-align:right;">40</div>
<div class="c" style="top:874.55px;font-size:14px;line-height:14px;color:#1a1a1a;left:887.5px;width:129px;overflow:hidden;padding-bottom:5px;white-space:nowrap;">free seo tool</div>
<div class="c" style="top:874.55px;font-size:14px;line-height:14px;color:#1a1a1a;left:860.9px;width:400px;text-align:center;">1</div>
<div class="c" style="top:874.55px;font-size:14px;line-height:14px;color:#1a1a1a;left:823.25px;width:400px;text-align:right;">19</div>
<div class="c" style="top:895.55px;font-size:14px;line-height:14px;color:#1a1a1a;left:887.5px;width:129px;overflow:hidden;padding-bottom:5px;white-space:nowrap;">google NUM ranking</div>
<div class="c" style="top:895.55px;font-size:14px;line-height:14px;color:#1a1a1a;left:860.9px;width:400px;text-align:center;">1</div>
<div class="c" style="top:895.55px;font-size:14px;line-height:14px;color:#1a1a1a;left:823.25px;width:400px;text-align:right;">22</div>
<div style="left:883px;top:217.5px;width:345px;height:1.5px;background:#8a8a8a;"></div>
<div style="left:882px;top:219px;width:346.3px;height:22px;background:#000;"></div>
<div style="top:224.23px;font-size:13.9px;line-height:13.9px;color:#fff;font-weight:700;left:750.5px;width:400px;text-align:center;">Pattern</div>
<div style="top:224.23px;font-size:13.9px;line-height:13.9px;color:#fff;font-weight:700;left:860px;width:400px;text-align:center;">Count</div>
<div style="top:222.03px;font-size:13.9px;line-height:13.9px;color:#fff;font-weight:700;left:965px;width:400px;text-align:center;">Clicks (SUM)</div>
<div style="left:882px;top:184.9px;width:346.3px;height:2.6px;background:#686868;"></div>
<div style="left:882px;top:185px;width:2.35px;height:34px;background:#686868;"></div>
<div style="left:1226.3px;top:185px;width:2.4px;height:34px;background:#686868;"></div>
<div style="left:882px;top:241px;width:2.35px;height:676px;background:#686868;"></div>
<div style="left:1226.3px;top:241px;width:2.4px;height:676px;background:#686868;"></div>
<div style="left:0px;top:917px;width:1274px;height:37px;background:#f9fbfd;"></div>
<div style="left:0px;top:917px;width:1274px;height:1px;background:#e3e5e8;"></div>
<svg style="left:52px;top:927.4px;" width="19" height="19" viewBox="0 0 24 24" fill="#444746"><path d="M19 13h-6v6h-2v-6H5v-2h6V5h2v6h6v2z"></path></svg>
<svg style="left:92.8px;top:927.4px;" width="19" height="19" viewBox="0 0 24 24" fill="#444746"><path d="M3 18h18v-2H3v2zm0-5h18v-2H3v2zm0-7v2h18V6H3z"></path></svg>
<div style="top: 929.83px; font-size: 14.5px; line-height: 14.5px; color: rgb(68, 71, 70); left: 147.5px; -webkit-text-stroke: 0.25px rgb(68, 71, 70); letter-spacing: 0.354px;">[1] Read me first</div>
<svg style="left:265.6px;top:928px;" width="19" height="19" viewBox="0 0 24 24" fill="#444746"><path d="M7 10l5 5 5-5z"></path></svg>
<div style="left:134.9px;top:950.5px;width:156px;height:4px;background:#2d0a0c;"></div>
<div style="top: 929.83px; font-size: 14.5px; line-height: 14.5px; color: rgb(68, 71, 70); left: 305.1px; -webkit-text-stroke: 0.25px rgb(68, 71, 70); letter-spacing: 0.524px;">Required Information</div>
<svg style="left:457.7px;top:928px;" width="19" height="19" viewBox="0 0 24 24" fill="#444746"><path d="M7 10l5 5 5-5z"></path></svg>
<div style="left:483.4px;top:917.5px;width:95.2px;height:36.5px;background:#e1e9f7;"></div>
<div style="top: 929.57px; font-size: 14.8px; line-height: 14.8px; color: rgb(27, 79, 150); left: 495.2px; -webkit-text-stroke: 0.7px rgb(27, 79, 150); letter-spacing: 0.465px;">Results</div>
<svg style="left:553.5px;top:927.5px;" width="19" height="19" viewBox="0 0 24 24" fill="#1b4f96"><path d="M7 10l5 5 5-5z"></path></svg>
<div style="left:484.4px;top:950.7px;width:94.2px;height:3.5px;background:#a7d5b0;"></div>
<svg style="left:1249.9px;top:928px;" width="19" height="19" viewBox="0 0 24 24" fill="#444746"><path d="M15.41 7.41L14 6l-6 6 6 6 1.41-1.41L10.83 12z"></path></svg>
</div>
</body></html>
